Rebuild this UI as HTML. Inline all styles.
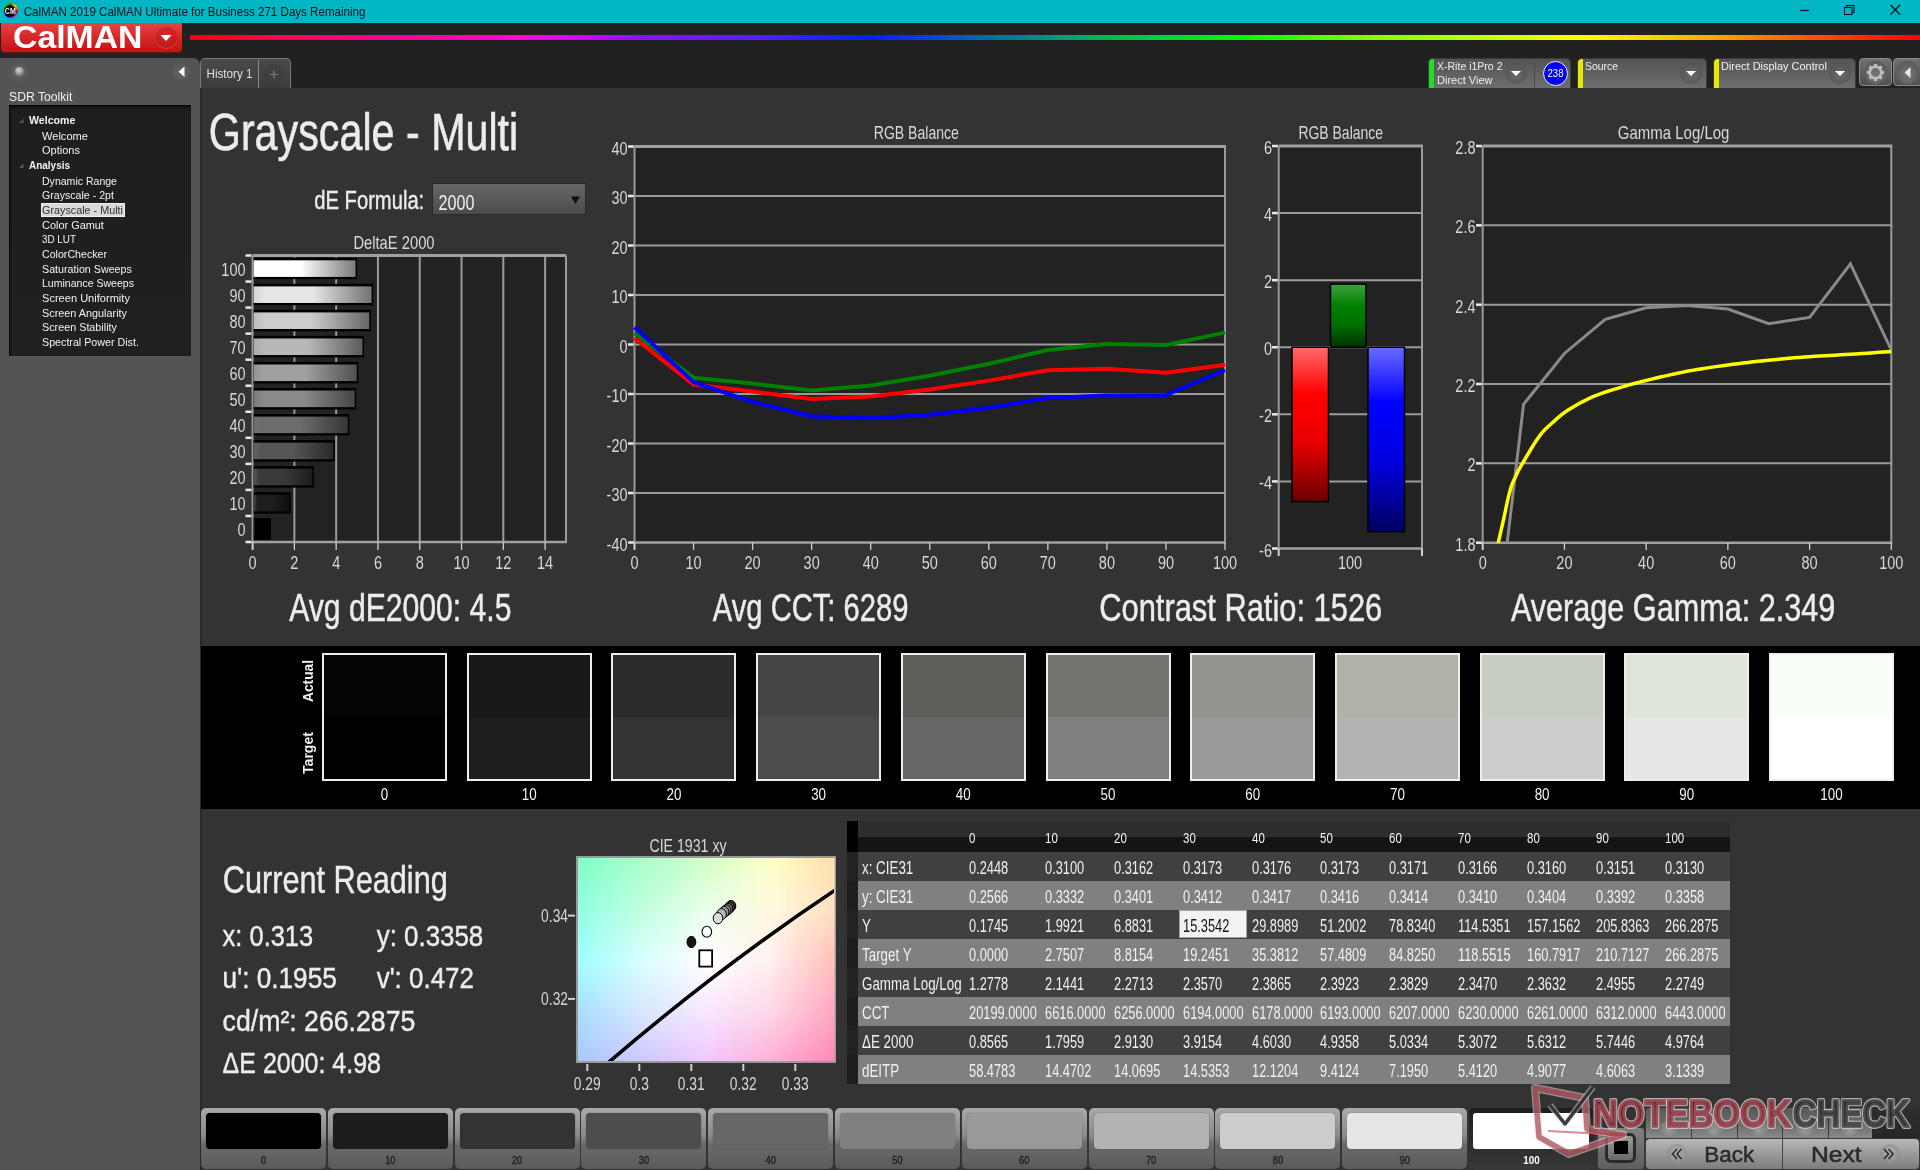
<!DOCTYPE html><html><head><meta charset="utf-8"><style>html,body{margin:0;padding:0}body{width:1920px;height:1170px;overflow:hidden;background:#333;position:relative;font-family:"Liberation Sans",sans-serif}div{position:absolute}svg{position:absolute;left:0;top:0;will-change:transform}text{font-family:"Liberation Sans",sans-serif}</style></head><body>
<div style="left:0px;top:0px;width:1920px;height:23px;background:#01b7c6"></div>
<div style="left:0px;top:23px;width:1920px;height:65px;background:#212121"></div>
<div style="left:200px;top:88px;width:1720px;height:1082px;background:#333"></div>
<div style="left:0px;top:58px;width:200px;height:1112px;background:#545454;border-top-right-radius:7px"></div>
<div style="left:200px;top:88px;width:2px;height:1082px;background:linear-gradient(to right,#262626,#2e2e2e)"></div>
<div style="left:1px;top:23px;width:181px;height:29px;background:linear-gradient(#e64444,#d42828 50%,#c41414);border-radius:0 0 4px 4px;box-shadow:0 1px 0 #5a1a1a"></div>
<div style="left:156px;top:27px;width:21px;height:21px;border-radius:50%;background:radial-gradient(circle at 50% 30%,#d42a2a,#b81818);box-shadow:0 1px 1px rgba(255,120,120,.4)"></div>
<div style="left:2.8px;top:3px;width:15px;height:15px;border-radius:50%;background:conic-gradient(#607000,#ffd000 45deg,#ff4000 80deg,#900000 100deg,#ff0080 125deg,#d000d0 150deg,#4000ff 200deg,#0040ff 225deg,#00a0ff 250deg,#00c060 280deg,#00e000 315deg,#607000)"></div>
<div style="left:4.3px;top:4.5px;width:12px;height:12px;border-radius:50%;background:#000"></div>
<div style="left:190px;top:35px;width:1730px;height:5px;background:linear-gradient(to right,#ff0000 0%,#ff0040 4%,#ff0080 9.5%,#ff00b0 15%,#ff00e0 19%,#d000ff 23%,#9010ff 26%,#5020ff 32.8%,#0020ff 39.5%,#0060c0 45%,#00b060 52%,#00ff00 60.8%,#80ff00 68.3%,#f8ff00 80.3%,#ffc000 86%,#ff8000 90.6%,#ff0000 100%)"></div>
<div style="left:200px;top:58px;width:91px;height:30px;background:linear-gradient(#4a4a4a,#3c3c3c);border:1px solid #7a7a7a;border-bottom:none;border-radius:5px 5px 0 0;box-sizing:border-box"></div>
<div style="left:258px;top:60px;width:1px;height:28px;background:#8a8a8a"></div>
<div style="left:264px;top:64px;width:20px;height:20px;border-radius:50%;background:radial-gradient(circle at 50% 40%,#444,#3a3a3a)"></div>
<div style="left:9px;top:62px;width:20px;height:20px;border-radius:50%;background:radial-gradient(circle at 50% 50%,#5e5e5e 40%,#545454 70%,#5a5a5a)"></div>
<div style="left:15px;top:67px;width:9px;height:9px;border-radius:50%;background:radial-gradient(circle at 40% 35%,#d8d8d8,#8a8a8a 60%,#666)"></div>
<div style="left:171px;top:62px;width:20px;height:20px;border-radius:50%;background:radial-gradient(circle at 50% 50%,#5e5e5e 40%,#545454 70%,#5a5a5a)"></div>
<div style="left:9px;top:105px;width:182px;height:251px;background:linear-gradient(#161616,#1e1e1e 6px,#202020);box-shadow:inset 1px 1px 2px #000"></div>
<div style="left:41px;top:203px;width:84px;height:14px;background:#d9d9d9;border:1px solid #f0f0f0;box-sizing:border-box"></div>
<div style="left:1428px;top:58px;width:143px;height:30px;background:linear-gradient(#555 0%,#5f5f5f 45%,#6e6e6e 100%);border-radius:5px 5px 0 0;border:1px solid #3a3a3a;border-bottom:none;box-sizing:border-box"></div>
<div style="left:1429px;top:59px;width:5px;height:29px;background:#22dd22;border-top-left-radius:4px"></div>
<div style="left:1577px;top:58px;width:130px;height:30px;background:linear-gradient(#555 0%,#5f5f5f 45%,#6e6e6e 100%);border-radius:5px 5px 0 0;border:1px solid #3a3a3a;border-bottom:none;box-sizing:border-box"></div>
<div style="left:1578px;top:59px;width:5px;height:29px;background:#e8e800;border-top-left-radius:4px"></div>
<div style="left:1713px;top:58px;width:143px;height:30px;background:linear-gradient(#555 0%,#5f5f5f 45%,#6e6e6e 100%);border-radius:5px 5px 0 0;border:1px solid #3a3a3a;border-bottom:none;box-sizing:border-box"></div>
<div style="left:1714px;top:59px;width:5px;height:29px;background:#e8e800;border-top-left-radius:4px"></div>
<div style="left:1505px;top:62px;width:22px;height:22px;border-radius:50%;background:radial-gradient(circle at 50% 60%,#6a6a6a,#555 70%,#4e4e4e)"></div>
<div style="left:1680px;top:62px;width:22px;height:22px;border-radius:50%;background:radial-gradient(circle at 50% 60%,#6a6a6a,#555 70%,#4e4e4e)"></div>
<div style="left:1829px;top:62px;width:22px;height:22px;border-radius:50%;background:radial-gradient(circle at 50% 60%,#6a6a6a,#555 70%,#4e4e4e)"></div>
<div style="left:1534px;top:61px;width:1px;height:27px;background:#4a4a4a"></div>
<div style="left:1543px;top:61px;width:25px;height:25px;border-radius:50%;background:#0000f0;border:1px solid #e8e8ff;box-sizing:border-box"></div>
<div style="left:1859px;top:58px;width:33px;height:28px;background:linear-gradient(#707070,#505050);border:1px solid #8a8a8a;border-radius:4px;box-sizing:border-box"></div>
<div style="left:1864px;top:61px;width:23px;height:23px;border-radius:50%;background:radial-gradient(circle at 50% 60%,#777,#5a5a5a 75%)"></div>
<div style="left:1893px;top:58px;width:30px;height:28px;background:linear-gradient(#707070,#505050);border:1px solid #8a8a8a;border-radius:4px;box-sizing:border-box"></div>
<div style="left:1896px;top:61px;width:23px;height:23px;border-radius:50%;background:radial-gradient(circle at 50% 60%,#777,#5a5a5a 75%)"></div>
<div style="left:432px;top:183px;width:154px;height:32px;background:linear-gradient(#666,#5a5a5a 50%,#4a4a4a);border:1px solid #2a2a2a;box-sizing:border-box"></div>
<div style="left:201px;top:646px;width:1719px;height:163px;background:#000"></div>
<div style="left:322px;top:653px;width:125px;height:128px;border:2px solid #eeeeee;box-sizing:border-box;background:linear-gradient(#030406 50%,#000000 50%)"></div>
<div style="left:467px;top:653px;width:125px;height:128px;border:2px solid #eeeeee;box-sizing:border-box;background:linear-gradient(#171918 50%,#1e1e1e 50%)"></div>
<div style="left:611px;top:653px;width:125px;height:128px;border:2px solid #eeeeee;box-sizing:border-box;background:linear-gradient(#2b2b29 50%,#333333 50%)"></div>
<div style="left:756px;top:653px;width:125px;height:128px;border:2px solid #eeeeee;box-sizing:border-box;background:linear-gradient(#454544 50%,#4c4c4c 50%)"></div>
<div style="left:901px;top:653px;width:125px;height:128px;border:2px solid #eeeeee;box-sizing:border-box;background:linear-gradient(#5c5f5a 50%,#666666 50%)"></div>
<div style="left:1046px;top:653px;width:125px;height:128px;border:2px solid #eeeeee;box-sizing:border-box;background:linear-gradient(#737670 50%,#808080 50%)"></div>
<div style="left:1190px;top:653px;width:125px;height:128px;border:2px solid #eeeeee;box-sizing:border-box;background:linear-gradient(#939690 50%,#9a9a9a 50%)"></div>
<div style="left:1335px;top:653px;width:125px;height:128px;border:2px solid #eeeeee;box-sizing:border-box;background:linear-gradient(#b0b2a7 50%,#b3b3b3 50%)"></div>
<div style="left:1480px;top:653px;width:125px;height:128px;border:2px solid #eeeeee;box-sizing:border-box;background:linear-gradient(#c8cdc2 50%,#cccccc 50%)"></div>
<div style="left:1624px;top:653px;width:125px;height:128px;border:2px solid #eeeeee;box-sizing:border-box;background:linear-gradient(#e0e5da 50%,#e6e6e6 50%)"></div>
<div style="left:1769px;top:653px;width:125px;height:128px;border:2px solid #eeeeee;box-sizing:border-box;background:linear-gradient(#f9fff8 50%,#ffffff 50%)"></div>
<div style="left:201px;top:1108px;width:125px;height:61px;background:linear-gradient(#aaa 0%,#8a8a8a 45%,#6a6a6a 60%,#5a5a5a 100%);border-radius:5px"></div>
<div style="left:206px;top:1113px;width:115px;height:36px;background:#000;border-radius:4px;box-shadow:0 0 1px #444"></div>
<div style="left:328px;top:1108px;width:125px;height:61px;background:linear-gradient(#aaa 0%,#8a8a8a 45%,#6a6a6a 60%,#5a5a5a 100%);border-radius:5px"></div>
<div style="left:333px;top:1113px;width:115px;height:36px;background:#1c1c1c;border-radius:4px;box-shadow:0 0 1px #444"></div>
<div style="left:455px;top:1108px;width:125px;height:61px;background:linear-gradient(#aaa 0%,#8a8a8a 45%,#6a6a6a 60%,#5a5a5a 100%);border-radius:5px"></div>
<div style="left:460px;top:1113px;width:115px;height:36px;background:#333;border-radius:4px;box-shadow:0 0 1px #444"></div>
<div style="left:581px;top:1108px;width:125px;height:61px;background:linear-gradient(#aaa 0%,#8a8a8a 45%,#6a6a6a 60%,#5a5a5a 100%);border-radius:5px"></div>
<div style="left:586px;top:1113px;width:115px;height:36px;background:#4d4d4d;border-radius:4px;box-shadow:0 0 1px #444"></div>
<div style="left:708px;top:1108px;width:125px;height:61px;background:linear-gradient(#aaa 0%,#8a8a8a 45%,#6a6a6a 60%,#5a5a5a 100%);border-radius:5px"></div>
<div style="left:713px;top:1113px;width:115px;height:36px;background:#666;border-radius:4px;box-shadow:0 0 1px #444"></div>
<div style="left:835px;top:1108px;width:125px;height:61px;background:linear-gradient(#aaa 0%,#8a8a8a 45%,#6a6a6a 60%,#5a5a5a 100%);border-radius:5px"></div>
<div style="left:840px;top:1113px;width:115px;height:36px;background:#808080;border-radius:4px;box-shadow:0 0 1px #444"></div>
<div style="left:962px;top:1108px;width:125px;height:61px;background:linear-gradient(#aaa 0%,#8a8a8a 45%,#6a6a6a 60%,#5a5a5a 100%);border-radius:5px"></div>
<div style="left:967px;top:1113px;width:115px;height:36px;background:#999;border-radius:4px;box-shadow:0 0 1px #444"></div>
<div style="left:1089px;top:1108px;width:125px;height:61px;background:linear-gradient(#aaa 0%,#8a8a8a 45%,#6a6a6a 60%,#5a5a5a 100%);border-radius:5px"></div>
<div style="left:1094px;top:1113px;width:115px;height:36px;background:#b3b3b3;border-radius:4px;box-shadow:0 0 1px #444"></div>
<div style="left:1215px;top:1108px;width:125px;height:61px;background:linear-gradient(#aaa 0%,#8a8a8a 45%,#6a6a6a 60%,#5a5a5a 100%);border-radius:5px"></div>
<div style="left:1220px;top:1113px;width:115px;height:36px;background:#ccc;border-radius:4px;box-shadow:0 0 1px #444"></div>
<div style="left:1342px;top:1108px;width:125px;height:61px;background:linear-gradient(#aaa 0%,#8a8a8a 45%,#6a6a6a 60%,#5a5a5a 100%);border-radius:5px"></div>
<div style="left:1347px;top:1113px;width:115px;height:36px;background:#e6e6e6;border-radius:4px;box-shadow:0 0 1px #444"></div>
<div style="left:1469px;top:1108px;width:125px;height:62px;background:linear-gradient(#1e1e1e,#2a2a2a 50%,#383838);border-radius:5px"></div>
<div style="left:1473px;top:1113px;width:116px;height:36px;background:#fff;border-radius:3px"></div>
<div style="left:1597px;top:1127px;width:48px;height:43px;background:linear-gradient(#808080,#5e5e5e);border-radius:4px;border:1px solid #3a3a3a;box-sizing:border-box"></div>
<div style="left:1605px;top:1133px;width:31px;height:30px;border:3px solid #2a2a2a;border-radius:6px;background:linear-gradient(#9a9a9a,#6a6a6a);box-sizing:border-box"></div>
<div style="left:1614px;top:1141px;width:14px;height:13px;background:#000"></div>
<div style="left:1646px;top:1108px;width:226px;height:30px;background:linear-gradient(#585858,#6a6a6a 50%,#8a8a8a);border-radius:3px 3px 0 0"></div>
<div style="left:1691px;top:1108px;width:1px;height:30px;background:#3a3a3a"></div>
<div style="left:1737px;top:1108px;width:1px;height:30px;background:#3a3a3a"></div>
<div style="left:1782px;top:1108px;width:1px;height:30px;background:#3a3a3a"></div>
<div style="left:1828px;top:1108px;width:1px;height:30px;background:#3a3a3a"></div>
<div style="left:1660px;top:1120px;width:18px;height:18px;border-radius:50%;background:radial-gradient(circle at 50% 60%,#9a9a9a,#7a7a7a 70%,rgba(120,120,120,0))"></div>
<div style="left:1705px;top:1120px;width:18px;height:18px;border-radius:50%;background:radial-gradient(circle at 50% 60%,#9a9a9a,#7a7a7a 70%,rgba(120,120,120,0))"></div>
<div style="left:1750px;top:1120px;width:18px;height:18px;border-radius:50%;background:radial-gradient(circle at 50% 60%,#9a9a9a,#7a7a7a 70%,rgba(120,120,120,0))"></div>
<div style="left:1796px;top:1120px;width:18px;height:18px;border-radius:50%;background:radial-gradient(circle at 50% 60%,#9a9a9a,#7a7a7a 70%,rgba(120,120,120,0))"></div>
<div style="left:1841px;top:1120px;width:18px;height:18px;border-radius:50%;background:radial-gradient(circle at 50% 60%,#9a9a9a,#7a7a7a 70%,rgba(120,120,120,0))"></div>
<div style="left:1872px;top:1108px;width:48px;height:30px;background:linear-gradient(#2e2e2e,#262626)"></div>
<div style="left:1646px;top:1139px;width:273px;height:30px;background:linear-gradient(#b8b8b8,#9a9a9a 50%,#7c7c7c);border-radius:4px;box-shadow:0 0 0 1px #3a3a3a"></div>
<div style="left:1782px;top:1139px;width:1px;height:30px;background:#444"></div>
<div style="left:1667px;top:1144px;width:20px;height:20px;border-radius:50%;background:radial-gradient(circle at 50% 40%,#b0b0b0,#7e7e7e)"></div>
<div style="left:1880px;top:1144px;width:20px;height:20px;border-radius:50%;background:radial-gradient(circle at 50% 40%,#b0b0b0,#7e7e7e)"></div>
<div style="left:847px;top:821px;width:883px;height:16px;background:#2d2d2d"></div>
<div style="left:847px;top:837px;width:883px;height:15px;background:#141414"></div>
<div style="left:847px;top:821px;width:11px;height:31px;background:#000"></div>
<div style="left:847px;top:852px;width:883px;height:29px;background:#404040"></div>
<div style="left:847px;top:852px;width:11px;height:29px;background:#222"></div>
<div style="left:847px;top:881px;width:883px;height:29px;background:#808080"></div>
<div style="left:847px;top:881px;width:11px;height:29px;background:#1e1e1e"></div>
<div style="left:847px;top:910px;width:883px;height:29px;background:#404040"></div>
<div style="left:847px;top:910px;width:11px;height:29px;background:#222"></div>
<div style="left:847px;top:939px;width:883px;height:29px;background:#808080"></div>
<div style="left:847px;top:939px;width:11px;height:29px;background:#1e1e1e"></div>
<div style="left:847px;top:968px;width:883px;height:29px;background:#404040"></div>
<div style="left:847px;top:968px;width:11px;height:29px;background:#222"></div>
<div style="left:847px;top:997px;width:883px;height:29px;background:#808080"></div>
<div style="left:847px;top:997px;width:11px;height:29px;background:#1e1e1e"></div>
<div style="left:847px;top:1026px;width:883px;height:29px;background:#404040"></div>
<div style="left:847px;top:1026px;width:11px;height:29px;background:#222"></div>
<div style="left:847px;top:1055px;width:883px;height:29px;background:#808080"></div>
<div style="left:847px;top:1055px;width:11px;height:29px;background:#1e1e1e"></div>
<div style="left:1179px;top:910px;width:68px;height:28px;background:#f2f2f2;border:1px solid #a0a0a0;box-sizing:border-box"></div>
<div style="left:576px;top:856px;width:260px;height:207px;box-sizing:border-box;border:2px solid #9a9a9a;background:#fff"></div>
<svg width="1920" height="1170" viewBox="0 0 1920 1170">
<defs><linearGradient id="bg0" x1="0" y1="0" x2="1" y2="0"><stop offset="0" stop-color="#3d3d3d"/><stop offset="0.1" stop-color="#000000"/><stop offset="0.5" stop-color="#000000"/><stop offset="1" stop-color="#000000"/></linearGradient>
<linearGradient id="bg1" x1="0" y1="0" x2="1" y2="0"><stop offset="0" stop-color="#4b4b4b"/><stop offset="0.1" stop-color="#1e1e1e"/><stop offset="0.5" stop-color="#1e1e1e"/><stop offset="1" stop-color="#0f0f0f"/></linearGradient>
<linearGradient id="bg2" x1="0" y1="0" x2="1" y2="0"><stop offset="0" stop-color="#575757"/><stop offset="0.1" stop-color="#3a3a3a"/><stop offset="0.5" stop-color="#3a3a3a"/><stop offset="1" stop-color="#1d1d1d"/></linearGradient>
<linearGradient id="bg3" x1="0" y1="0" x2="1" y2="0"><stop offset="0" stop-color="#636363"/><stop offset="0.1" stop-color="#555555"/><stop offset="0.5" stop-color="#555555"/><stop offset="1" stop-color="#2a2a2a"/></linearGradient>
<linearGradient id="bg4" x1="0" y1="0" x2="1" y2="0"><stop offset="0" stop-color="#6e6e6e"/><stop offset="0.1" stop-color="#6c6c6c"/><stop offset="0.5" stop-color="#6c6c6c"/><stop offset="1" stop-color="#363636"/></linearGradient>
<linearGradient id="bg5" x1="0" y1="0" x2="1" y2="0"><stop offset="0" stop-color="#7b7b7b"/><stop offset="0.1" stop-color="#8a8a8a"/><stop offset="0.5" stop-color="#8a8a8a"/><stop offset="1" stop-color="#454545"/></linearGradient>
<linearGradient id="bg6" x1="0" y1="0" x2="1" y2="0"><stop offset="0" stop-color="#949494"/><stop offset="0.1" stop-color="#a0a0a0"/><stop offset="0.5" stop-color="#a0a0a0"/><stop offset="1" stop-color="#505050"/></linearGradient>
<linearGradient id="bg7" x1="0" y1="0" x2="1" y2="0"><stop offset="0" stop-color="#ababab"/><stop offset="0.1" stop-color="#b8b8b8"/><stop offset="0.5" stop-color="#b8b8b8"/><stop offset="1" stop-color="#5c5c5c"/></linearGradient>
<linearGradient id="bg8" x1="0" y1="0" x2="1" y2="0"><stop offset="0" stop-color="#bdbdbd"/><stop offset="0.1" stop-color="#cccccc"/><stop offset="0.5" stop-color="#cccccc"/><stop offset="1" stop-color="#666666"/></linearGradient>
<linearGradient id="bg9" x1="0" y1="0" x2="1" y2="0"><stop offset="0" stop-color="#d5d5d5"/><stop offset="0.1" stop-color="#e6e6e6"/><stop offset="0.5" stop-color="#e6e6e6"/><stop offset="1" stop-color="#737373"/></linearGradient>
<linearGradient id="bg10" x1="0" y1="0" x2="1" y2="0"><stop offset="0" stop-color="#ffffff"/><stop offset="0.46" stop-color="#ffffff"/><stop offset="1" stop-color="#7a7a7a"/></linearGradient>
<linearGradient id="gR" x1="0" y1="0" x2="0" y2="1"><stop offset="0" stop-color="#ff6a6a"/><stop offset="0.3" stop-color="#ff0000"/><stop offset="0.62" stop-color="#e80000"/><stop offset="1" stop-color="#6a0000"/></linearGradient>
<linearGradient id="gG" x1="0" y1="0" x2="0" y2="1"><stop offset="0" stop-color="#40a040"/><stop offset="0.35" stop-color="#008000"/><stop offset="0.65" stop-color="#007000"/><stop offset="1" stop-color="#003000"/></linearGradient>
<linearGradient id="gB" x1="0" y1="0" x2="0" y2="1"><stop offset="0" stop-color="#6a6aff"/><stop offset="0.3" stop-color="#0000ff"/><stop offset="0.62" stop-color="#0000e0"/><stop offset="1" stop-color="#000060"/></linearGradient>
<clipPath id="gclip"><rect x="1482.7" y="146" width="408.5999999999999" height="396.70000000000005"/></clipPath>
<linearGradient id="cs0" x1="0" y1="0" x2="0" y2="1"><stop offset="0.00" stop-color="#82ffc8"/><stop offset="0.25" stop-color="#92ffe0"/><stop offset="0.50" stop-color="#a2ffff"/><stop offset="0.75" stop-color="#aae0ff"/><stop offset="1.00" stop-color="#aac8ff"/></linearGradient>
<linearGradient id="cs1" x1="0" y1="0" x2="0" y2="1"><stop offset="0.00" stop-color="#85ffc8"/><stop offset="0.25" stop-color="#96ffe0"/><stop offset="0.50" stop-color="#a7ffff"/><stop offset="0.75" stop-color="#aee1ff"/><stop offset="1.00" stop-color="#adc8ff"/></linearGradient>
<linearGradient id="cs2" x1="0" y1="0" x2="0" y2="1"><stop offset="0.00" stop-color="#88ffc8"/><stop offset="0.25" stop-color="#9affe0"/><stop offset="0.50" stop-color="#acffff"/><stop offset="0.75" stop-color="#b2e2ff"/><stop offset="1.00" stop-color="#b0c8ff"/></linearGradient>
<linearGradient id="cs3" x1="0" y1="0" x2="0" y2="1"><stop offset="0.00" stop-color="#8cffc8"/><stop offset="0.25" stop-color="#9effe0"/><stop offset="0.50" stop-color="#b0ffff"/><stop offset="0.75" stop-color="#b6e2ff"/><stop offset="1.00" stop-color="#b4c8ff"/></linearGradient>
<linearGradient id="cs4" x1="0" y1="0" x2="0" y2="1"><stop offset="0.00" stop-color="#8fffc8"/><stop offset="0.25" stop-color="#a2ffe0"/><stop offset="0.50" stop-color="#b5ffff"/><stop offset="0.75" stop-color="#bae3ff"/><stop offset="1.00" stop-color="#b7c8ff"/></linearGradient>
<linearGradient id="cs5" x1="0" y1="0" x2="0" y2="1"><stop offset="0.00" stop-color="#92ffc8"/><stop offset="0.25" stop-color="#a6ffe0"/><stop offset="0.50" stop-color="#baffff"/><stop offset="0.75" stop-color="#bee4ff"/><stop offset="1.00" stop-color="#bac8ff"/></linearGradient>
<linearGradient id="cs6" x1="0" y1="0" x2="0" y2="1"><stop offset="0.00" stop-color="#96ffc8"/><stop offset="0.25" stop-color="#aaffe0"/><stop offset="0.50" stop-color="#beffff"/><stop offset="0.75" stop-color="#c2e4ff"/><stop offset="1.00" stop-color="#bec8ff"/></linearGradient>
<linearGradient id="cs7" x1="0" y1="0" x2="0" y2="1"><stop offset="0.00" stop-color="#99ffc8"/><stop offset="0.25" stop-color="#aeffe0"/><stop offset="0.50" stop-color="#c3ffff"/><stop offset="0.75" stop-color="#c6e5ff"/><stop offset="1.00" stop-color="#c1c8ff"/></linearGradient>
<linearGradient id="cs8" x1="0" y1="0" x2="0" y2="1"><stop offset="0.00" stop-color="#9cffc8"/><stop offset="0.25" stop-color="#b2ffe0"/><stop offset="0.50" stop-color="#c8ffff"/><stop offset="0.75" stop-color="#cae6ff"/><stop offset="1.00" stop-color="#c4c8ff"/></linearGradient>
<linearGradient id="cs9" x1="0" y1="0" x2="0" y2="1"><stop offset="0.00" stop-color="#a0ffc8"/><stop offset="0.25" stop-color="#b6ffe0"/><stop offset="0.50" stop-color="#ccffff"/><stop offset="0.75" stop-color="#cee6ff"/><stop offset="1.00" stop-color="#c8c8ff"/></linearGradient>
<linearGradient id="cs10" x1="0" y1="0" x2="0" y2="1"><stop offset="0.00" stop-color="#a3ffc8"/><stop offset="0.25" stop-color="#baffe0"/><stop offset="0.50" stop-color="#d1ffff"/><stop offset="0.75" stop-color="#d2e7ff"/><stop offset="1.00" stop-color="#cbc8ff"/></linearGradient>
<linearGradient id="cs11" x1="0" y1="0" x2="0" y2="1"><stop offset="0.00" stop-color="#a6ffc8"/><stop offset="0.25" stop-color="#beffe0"/><stop offset="0.50" stop-color="#d6ffff"/><stop offset="0.75" stop-color="#d6e8ff"/><stop offset="1.00" stop-color="#cec8ff"/></linearGradient>
<linearGradient id="cs12" x1="0" y1="0" x2="0" y2="1"><stop offset="0.00" stop-color="#aaffc8"/><stop offset="0.25" stop-color="#c2ffe0"/><stop offset="0.50" stop-color="#daffff"/><stop offset="0.75" stop-color="#d9e8ff"/><stop offset="1.00" stop-color="#d1c8ff"/></linearGradient>
<linearGradient id="cs13" x1="0" y1="0" x2="0" y2="1"><stop offset="0.00" stop-color="#adffc8"/><stop offset="0.25" stop-color="#c5ffe1"/><stop offset="0.50" stop-color="#ddffff"/><stop offset="0.75" stop-color="#dce8ff"/><stop offset="1.00" stop-color="#d4c8ff"/></linearGradient>
<linearGradient id="cs14" x1="0" y1="0" x2="0" y2="1"><stop offset="0.00" stop-color="#b0ffc8"/><stop offset="0.25" stop-color="#c9ffe2"/><stop offset="0.50" stop-color="#e0ffff"/><stop offset="0.75" stop-color="#dfe8ff"/><stop offset="1.00" stop-color="#d7c8ff"/></linearGradient>
<linearGradient id="cs15" x1="0" y1="0" x2="0" y2="1"><stop offset="0.00" stop-color="#b4ffc8"/><stop offset="0.25" stop-color="#ccffe3"/><stop offset="0.50" stop-color="#e3ffff"/><stop offset="0.75" stop-color="#e1e8ff"/><stop offset="1.00" stop-color="#d9c8ff"/></linearGradient>
<linearGradient id="cs16" x1="0" y1="0" x2="0" y2="1"><stop offset="0.00" stop-color="#b7ffc8"/><stop offset="0.25" stop-color="#d0ffe4"/><stop offset="0.50" stop-color="#e7ffff"/><stop offset="0.75" stop-color="#e4e8ff"/><stop offset="1.00" stop-color="#dcc8ff"/></linearGradient>
<linearGradient id="cs17" x1="0" y1="0" x2="0" y2="1"><stop offset="0.00" stop-color="#baffc8"/><stop offset="0.25" stop-color="#d3ffe5"/><stop offset="0.50" stop-color="#eaffff"/><stop offset="0.75" stop-color="#e7e8ff"/><stop offset="1.00" stop-color="#dfc8ff"/></linearGradient>
<linearGradient id="cs18" x1="0" y1="0" x2="0" y2="1"><stop offset="0.00" stop-color="#beffc8"/><stop offset="0.25" stop-color="#d7ffe5"/><stop offset="0.50" stop-color="#edffff"/><stop offset="0.75" stop-color="#e9e8ff"/><stop offset="1.00" stop-color="#e1c8ff"/></linearGradient>
<linearGradient id="cs19" x1="0" y1="0" x2="0" y2="1"><stop offset="0.00" stop-color="#c1ffc8"/><stop offset="0.25" stop-color="#daffe6"/><stop offset="0.50" stop-color="#f0ffff"/><stop offset="0.75" stop-color="#ece8ff"/><stop offset="1.00" stop-color="#e4c8ff"/></linearGradient>
<linearGradient id="cs20" x1="0" y1="0" x2="0" y2="1"><stop offset="0.00" stop-color="#c4ffc8"/><stop offset="0.25" stop-color="#deffe7"/><stop offset="0.50" stop-color="#f4ffff"/><stop offset="0.75" stop-color="#efe8ff"/><stop offset="1.00" stop-color="#e7c8ff"/></linearGradient>
<linearGradient id="cs21" x1="0" y1="0" x2="0" y2="1"><stop offset="0.00" stop-color="#c8ffc8"/><stop offset="0.25" stop-color="#e1ffe8"/><stop offset="0.50" stop-color="#f7ffff"/><stop offset="0.75" stop-color="#f1e8ff"/><stop offset="1.00" stop-color="#e9c8ff"/></linearGradient>
<linearGradient id="cs22" x1="0" y1="0" x2="0" y2="1"><stop offset="0.00" stop-color="#cbffc8"/><stop offset="0.25" stop-color="#e5ffe9"/><stop offset="0.50" stop-color="#faffff"/><stop offset="0.75" stop-color="#f4e8ff"/><stop offset="1.00" stop-color="#ecc8ff"/></linearGradient>
<linearGradient id="cs23" x1="0" y1="0" x2="0" y2="1"><stop offset="0.00" stop-color="#ceffc8"/><stop offset="0.25" stop-color="#e8ffea"/><stop offset="0.50" stop-color="#fdffff"/><stop offset="0.75" stop-color="#f7e8ff"/><stop offset="1.00" stop-color="#efc8ff"/></linearGradient>
<linearGradient id="cs24" x1="0" y1="0" x2="0" y2="1"><stop offset="0.00" stop-color="#d2ffc8"/><stop offset="0.25" stop-color="#ebffea"/><stop offset="0.50" stop-color="#fffefe"/><stop offset="0.75" stop-color="#f8e7fe"/><stop offset="1.00" stop-color="#f1c7fd"/></linearGradient>
<linearGradient id="cs25" x1="0" y1="0" x2="0" y2="1"><stop offset="0.00" stop-color="#d6ffc8"/><stop offset="0.25" stop-color="#edfee9"/><stop offset="0.50" stop-color="#fffdfd"/><stop offset="0.75" stop-color="#f9e6fc"/><stop offset="1.00" stop-color="#f2c5fa"/></linearGradient>
<linearGradient id="cs26" x1="0" y1="0" x2="0" y2="1"><stop offset="0.00" stop-color="#daffc8"/><stop offset="0.25" stop-color="#eefee8"/><stop offset="0.50" stop-color="#fffcfc"/><stop offset="0.75" stop-color="#f9e5fa"/><stop offset="1.00" stop-color="#f3c3f7"/></linearGradient>
<linearGradient id="cs27" x1="0" y1="0" x2="0" y2="1"><stop offset="0.00" stop-color="#deffc8"/><stop offset="0.25" stop-color="#f0fee7"/><stop offset="0.50" stop-color="#fffbfb"/><stop offset="0.75" stop-color="#fae3f8"/><stop offset="1.00" stop-color="#f4c1f4"/></linearGradient>
<linearGradient id="cs28" x1="0" y1="0" x2="0" y2="1"><stop offset="0.00" stop-color="#e2ffc8"/><stop offset="0.25" stop-color="#f2fde6"/><stop offset="0.50" stop-color="#fff9f9"/><stop offset="0.75" stop-color="#fbe2f6"/><stop offset="1.00" stop-color="#f6bff0"/></linearGradient>
<linearGradient id="cs29" x1="0" y1="0" x2="0" y2="1"><stop offset="0.00" stop-color="#e6ffc8"/><stop offset="0.25" stop-color="#f4fde5"/><stop offset="0.50" stop-color="#fff8f8"/><stop offset="0.75" stop-color="#fbe1f4"/><stop offset="1.00" stop-color="#f7bded"/></linearGradient>
<linearGradient id="cs30" x1="0" y1="0" x2="0" y2="1"><stop offset="0.00" stop-color="#e9ffc8"/><stop offset="0.25" stop-color="#f5fce5"/><stop offset="0.50" stop-color="#fff7f7"/><stop offset="0.75" stop-color="#fcdff3"/><stop offset="1.00" stop-color="#f8bbea"/></linearGradient>
<linearGradient id="cs31" x1="0" y1="0" x2="0" y2="1"><stop offset="0.00" stop-color="#edffc8"/><stop offset="0.25" stop-color="#f7fce4"/><stop offset="0.50" stop-color="#fff6f6"/><stop offset="0.75" stop-color="#fcdef1"/><stop offset="1.00" stop-color="#f9b9e7"/></linearGradient>
<linearGradient id="cs32" x1="0" y1="0" x2="0" y2="1"><stop offset="0.00" stop-color="#f1ffc8"/><stop offset="0.25" stop-color="#f9fbe3"/><stop offset="0.50" stop-color="#fff4f4"/><stop offset="0.75" stop-color="#fdddef"/><stop offset="1.00" stop-color="#fbb7e3"/></linearGradient>
<linearGradient id="cs33" x1="0" y1="0" x2="0" y2="1"><stop offset="0.00" stop-color="#f5ffc8"/><stop offset="0.25" stop-color="#fbfbe2"/><stop offset="0.50" stop-color="#fff3f3"/><stop offset="0.75" stop-color="#fedbed"/><stop offset="1.00" stop-color="#fcb5e0"/></linearGradient>
<linearGradient id="cs34" x1="0" y1="0" x2="0" y2="1"><stop offset="0.00" stop-color="#f9ffc8"/><stop offset="0.25" stop-color="#fcfbe1"/><stop offset="0.50" stop-color="#fff2f2"/><stop offset="0.75" stop-color="#fedaeb"/><stop offset="1.00" stop-color="#fdb3dd"/></linearGradient>
<linearGradient id="cs35" x1="0" y1="0" x2="0" y2="1"><stop offset="0.00" stop-color="#fdffc8"/><stop offset="0.25" stop-color="#fefae0"/><stop offset="0.50" stop-color="#fff1f1"/><stop offset="0.75" stop-color="#ffd9e9"/><stop offset="1.00" stop-color="#feb1da"/></linearGradient>
<linearGradient id="cs36" x1="0" y1="0" x2="0" y2="1"><stop offset="0.00" stop-color="#fffec7"/><stop offset="0.25" stop-color="#fff9df"/><stop offset="0.50" stop-color="#ffeeee"/><stop offset="0.75" stop-color="#ffd6e6"/><stop offset="1.00" stop-color="#ffaed7"/></linearGradient>
<linearGradient id="cs37" x1="0" y1="0" x2="0" y2="1"><stop offset="0.00" stop-color="#fffbc4"/><stop offset="0.25" stop-color="#fff7dc"/><stop offset="0.50" stop-color="#ffeae9"/><stop offset="0.75" stop-color="#ffd2e3"/><stop offset="1.00" stop-color="#ffabd4"/></linearGradient>
<linearGradient id="cs38" x1="0" y1="0" x2="0" y2="1"><stop offset="0.00" stop-color="#fff9c1"/><stop offset="0.25" stop-color="#fff5d9"/><stop offset="0.50" stop-color="#ffe6e4"/><stop offset="0.75" stop-color="#ffcee0"/><stop offset="1.00" stop-color="#ffa8d1"/></linearGradient>
<linearGradient id="cs39" x1="0" y1="0" x2="0" y2="1"><stop offset="0.00" stop-color="#fff6bf"/><stop offset="0.25" stop-color="#fff2d7"/><stop offset="0.50" stop-color="#ffe2e0"/><stop offset="0.75" stop-color="#ffcadc"/><stop offset="1.00" stop-color="#ffa4cf"/></linearGradient>
<linearGradient id="cs40" x1="0" y1="0" x2="0" y2="1"><stop offset="0.00" stop-color="#fff3bc"/><stop offset="0.25" stop-color="#fff0d4"/><stop offset="0.50" stop-color="#ffdedb"/><stop offset="0.75" stop-color="#ffc6d9"/><stop offset="1.00" stop-color="#ffa1cc"/></linearGradient>
<linearGradient id="cs41" x1="0" y1="0" x2="0" y2="1"><stop offset="0.00" stop-color="#fff1b9"/><stop offset="0.25" stop-color="#ffeed1"/><stop offset="0.50" stop-color="#ffdad6"/><stop offset="0.75" stop-color="#ffc2d6"/><stop offset="1.00" stop-color="#ff9ec9"/></linearGradient>
<linearGradient id="cs42" x1="0" y1="0" x2="0" y2="1"><stop offset="0.00" stop-color="#ffeeb7"/><stop offset="0.25" stop-color="#ffeccf"/><stop offset="0.50" stop-color="#ffd6d2"/><stop offset="0.75" stop-color="#ffbed2"/><stop offset="1.00" stop-color="#ff9ac7"/></linearGradient>
<linearGradient id="cs43" x1="0" y1="0" x2="0" y2="1"><stop offset="0.00" stop-color="#ffecb4"/><stop offset="0.25" stop-color="#ffeacc"/><stop offset="0.50" stop-color="#ffd2cd"/><stop offset="0.75" stop-color="#ffbacf"/><stop offset="1.00" stop-color="#ff97c4"/></linearGradient>
<linearGradient id="cs44" x1="0" y1="0" x2="0" y2="1"><stop offset="0.00" stop-color="#ffe9b1"/><stop offset="0.25" stop-color="#ffe8c9"/><stop offset="0.50" stop-color="#ffcec8"/><stop offset="0.75" stop-color="#ffb6cc"/><stop offset="1.00" stop-color="#ff94c1"/></linearGradient>
<linearGradient id="cs45" x1="0" y1="0" x2="0" y2="1"><stop offset="0.00" stop-color="#ffe6af"/><stop offset="0.25" stop-color="#ffe5c7"/><stop offset="0.50" stop-color="#ffcac4"/><stop offset="0.75" stop-color="#ffb2c8"/><stop offset="1.00" stop-color="#ff90bf"/></linearGradient>
<linearGradient id="cs46" x1="0" y1="0" x2="0" y2="1"><stop offset="0.00" stop-color="#ffe4ac"/><stop offset="0.25" stop-color="#ffe3c4"/><stop offset="0.50" stop-color="#ffc6bf"/><stop offset="0.75" stop-color="#ffaec5"/><stop offset="1.00" stop-color="#ff8dbc"/></linearGradient>
<linearGradient id="cs47" x1="0" y1="0" x2="0" y2="1"><stop offset="0.00" stop-color="#ffe1a9"/><stop offset="0.25" stop-color="#ffe1c1"/><stop offset="0.50" stop-color="#ffc2ba"/><stop offset="0.75" stop-color="#ffaac2"/><stop offset="1.00" stop-color="#ff8ab9"/></linearGradient>
<clipPath id="cclip"><rect x="578" y="858" width="256" height="203"/></clipPath></defs>
<rect x="252.60" y="255.50" width="313.40" height="286.50" fill="#222"/>
<line x1="294.39" y1="255.50" x2="294.39" y2="542.00" stroke="#9a9a9a" stroke-width="2"/>
<line x1="336.17" y1="255.50" x2="336.17" y2="542.00" stroke="#9a9a9a" stroke-width="2"/>
<line x1="377.96" y1="255.50" x2="377.96" y2="542.00" stroke="#9a9a9a" stroke-width="2"/>
<line x1="419.75" y1="255.50" x2="419.75" y2="542.00" stroke="#9a9a9a" stroke-width="2"/>
<line x1="461.53" y1="255.50" x2="461.53" y2="542.00" stroke="#9a9a9a" stroke-width="2"/>
<line x1="503.32" y1="255.50" x2="503.32" y2="542.00" stroke="#9a9a9a" stroke-width="2"/>
<line x1="545.11" y1="255.50" x2="545.11" y2="542.00" stroke="#9a9a9a" stroke-width="2"/>
<line x1="252.60" y1="255.50" x2="566.00" y2="255.50" stroke="#a0a0a0" stroke-width="3"/>
<line x1="566.00" y1="255.50" x2="566.00" y2="542.00" stroke="#9a9a9a" stroke-width="2"/>
<line x1="252.60" y1="255.50" x2="252.60" y2="543.00" stroke="#9a9a9a" stroke-width="2"/>
<line x1="251.60" y1="542.00" x2="567.00" y2="542.00" stroke="#a0a0a0" stroke-width="2.5"/>
<line x1="245.50" y1="542.00" x2="251.50" y2="542.00" stroke="#e8e8e8" stroke-width="2.5"/>
<line x1="245.50" y1="515.95" x2="251.50" y2="515.95" stroke="#e8e8e8" stroke-width="2.5"/>
<line x1="245.50" y1="489.91" x2="251.50" y2="489.91" stroke="#e8e8e8" stroke-width="2.5"/>
<line x1="245.50" y1="463.86" x2="251.50" y2="463.86" stroke="#e8e8e8" stroke-width="2.5"/>
<line x1="245.50" y1="437.82" x2="251.50" y2="437.82" stroke="#e8e8e8" stroke-width="2.5"/>
<line x1="245.50" y1="411.77" x2="251.50" y2="411.77" stroke="#e8e8e8" stroke-width="2.5"/>
<line x1="245.50" y1="385.73" x2="251.50" y2="385.73" stroke="#e8e8e8" stroke-width="2.5"/>
<line x1="245.50" y1="359.68" x2="251.50" y2="359.68" stroke="#e8e8e8" stroke-width="2.5"/>
<line x1="245.50" y1="333.64" x2="251.50" y2="333.64" stroke="#e8e8e8" stroke-width="2.5"/>
<line x1="245.50" y1="307.59" x2="251.50" y2="307.59" stroke="#e8e8e8" stroke-width="2.5"/>
<line x1="245.50" y1="281.55" x2="251.50" y2="281.55" stroke="#e8e8e8" stroke-width="2.5"/>
<line x1="245.50" y1="255.50" x2="251.50" y2="255.50" stroke="#e8e8e8" stroke-width="2.5"/>
<line x1="252.60" y1="542.00" x2="252.60" y2="550.00" stroke="#d0d0d0" stroke-width="2"/>
<text transform="translate(252.60,569.00) scale(0.7800,1)" font-size="18.60" fill="#d8d8d8" text-anchor="middle">0</text>
<line x1="294.39" y1="542.00" x2="294.39" y2="550.00" stroke="#d0d0d0" stroke-width="1.3"/>
<text transform="translate(294.39,569.00) scale(0.7800,1)" font-size="18.60" fill="#d8d8d8" text-anchor="middle">2</text>
<line x1="336.17" y1="542.00" x2="336.17" y2="550.00" stroke="#d0d0d0" stroke-width="1.3"/>
<text transform="translate(336.17,569.00) scale(0.7800,1)" font-size="18.60" fill="#d8d8d8" text-anchor="middle">4</text>
<line x1="377.96" y1="542.00" x2="377.96" y2="550.00" stroke="#d0d0d0" stroke-width="1.3"/>
<text transform="translate(377.96,569.00) scale(0.7800,1)" font-size="18.60" fill="#d8d8d8" text-anchor="middle">6</text>
<line x1="419.75" y1="542.00" x2="419.75" y2="550.00" stroke="#d0d0d0" stroke-width="1.3"/>
<text transform="translate(419.75,569.00) scale(0.7800,1)" font-size="18.60" fill="#d8d8d8" text-anchor="middle">8</text>
<line x1="461.53" y1="542.00" x2="461.53" y2="550.00" stroke="#d0d0d0" stroke-width="1.3"/>
<text transform="translate(461.53,569.00) scale(0.7800,1)" font-size="18.60" fill="#d8d8d8" text-anchor="middle">10</text>
<line x1="503.32" y1="542.00" x2="503.32" y2="550.00" stroke="#d0d0d0" stroke-width="1.3"/>
<text transform="translate(503.32,569.00) scale(0.7800,1)" font-size="18.60" fill="#d8d8d8" text-anchor="middle">12</text>
<line x1="545.11" y1="542.00" x2="545.11" y2="550.00" stroke="#d0d0d0" stroke-width="1.3"/>
<text transform="translate(545.11,569.00) scale(0.7800,1)" font-size="18.60" fill="#d8d8d8" text-anchor="middle">14</text>
<rect x="253.60" y="518.18" width="17.40" height="21.5" fill="#000"/>
<rect x="253.60" y="520.78" width="15.90" height="16.6" fill="url(#bg0)"/>
<text transform="translate(245.50,536.18) scale(0.7800,1)" font-size="18.60" fill="#d8d8d8" text-anchor="end">0</text>
<rect x="253.60" y="492.13" width="37.02" height="21.5" fill="#000"/>
<rect x="253.60" y="494.73" width="35.52" height="16.6" fill="url(#bg1)"/>
<text transform="translate(245.50,510.13) scale(0.7800,1)" font-size="18.60" fill="#d8d8d8" text-anchor="end">10</text>
<rect x="253.60" y="466.09" width="60.36" height="21.5" fill="#000"/>
<rect x="253.60" y="468.69" width="58.86" height="16.6" fill="url(#bg2)"/>
<text transform="translate(245.50,484.09) scale(0.7800,1)" font-size="18.60" fill="#d8d8d8" text-anchor="end">20</text>
<rect x="253.60" y="440.04" width="81.31" height="21.5" fill="#000"/>
<rect x="253.60" y="442.64" width="79.81" height="16.6" fill="url(#bg3)"/>
<text transform="translate(245.50,458.04) scale(0.7800,1)" font-size="18.60" fill="#d8d8d8" text-anchor="end">30</text>
<rect x="253.60" y="414.00" width="95.67" height="21.5" fill="#000"/>
<rect x="253.60" y="416.60" width="94.17" height="16.6" fill="url(#bg4)"/>
<text transform="translate(245.50,432.00) scale(0.7800,1)" font-size="18.60" fill="#d8d8d8" text-anchor="end">40</text>
<rect x="253.60" y="387.95" width="102.63" height="21.5" fill="#000"/>
<rect x="253.60" y="390.55" width="101.13" height="16.6" fill="url(#bg5)"/>
<text transform="translate(245.50,405.95) scale(0.7800,1)" font-size="18.60" fill="#d8d8d8" text-anchor="end">50</text>
<rect x="253.60" y="361.90" width="104.66" height="21.5" fill="#000"/>
<rect x="253.60" y="364.50" width="103.16" height="16.6" fill="url(#bg6)"/>
<text transform="translate(245.50,379.90) scale(0.7800,1)" font-size="18.60" fill="#d8d8d8" text-anchor="end">60</text>
<rect x="253.60" y="335.86" width="110.39" height="21.5" fill="#000"/>
<rect x="253.60" y="338.46" width="108.89" height="16.6" fill="url(#bg7)"/>
<text transform="translate(245.50,353.86) scale(0.7800,1)" font-size="18.60" fill="#d8d8d8" text-anchor="end">70</text>
<rect x="253.60" y="309.81" width="117.15" height="21.5" fill="#000"/>
<rect x="253.60" y="312.41" width="115.65" height="16.6" fill="url(#bg8)"/>
<text transform="translate(245.50,327.81) scale(0.7800,1)" font-size="18.60" fill="#d8d8d8" text-anchor="end">80</text>
<rect x="253.60" y="283.77" width="119.52" height="21.5" fill="#000"/>
<rect x="253.60" y="286.37" width="118.02" height="16.6" fill="url(#bg9)"/>
<text transform="translate(245.50,301.77) scale(0.7800,1)" font-size="18.60" fill="#d8d8d8" text-anchor="end">90</text>
<rect x="253.60" y="257.72" width="103.47" height="21.5" fill="#000"/>
<rect x="253.60" y="260.32" width="101.97" height="16.6" fill="url(#bg10)"/>
<text transform="translate(245.50,275.72) scale(0.7800,1)" font-size="18.60" fill="#d8d8d8" text-anchor="end">100</text>
<rect x="634.50" y="146.50" width="590.50" height="396.00" fill="#222"/>
<line x1="634.50" y1="146.50" x2="1226.00" y2="146.50" stroke="#a0a0a0" stroke-width="3"/>
<line x1="628.00" y1="146.50" x2="634.00" y2="146.50" stroke="#e8e8e8" stroke-width="2.5"/>
<text transform="translate(627.50,154.50) scale(0.7800,1)" font-size="18.60" fill="#d8d8d8" text-anchor="end">40</text>
<line x1="634.50" y1="196.00" x2="1226.00" y2="196.00" stroke="#9a9a9a" stroke-width="2"/>
<line x1="628.00" y1="196.00" x2="634.00" y2="196.00" stroke="#e8e8e8" stroke-width="2.5"/>
<text transform="translate(627.50,204.00) scale(0.7800,1)" font-size="18.60" fill="#d8d8d8" text-anchor="end">30</text>
<line x1="634.50" y1="245.50" x2="1226.00" y2="245.50" stroke="#9a9a9a" stroke-width="2"/>
<line x1="628.00" y1="245.50" x2="634.00" y2="245.50" stroke="#e8e8e8" stroke-width="2.5"/>
<text transform="translate(627.50,253.50) scale(0.7800,1)" font-size="18.60" fill="#d8d8d8" text-anchor="end">20</text>
<line x1="634.50" y1="295.00" x2="1226.00" y2="295.00" stroke="#9a9a9a" stroke-width="2"/>
<line x1="628.00" y1="295.00" x2="634.00" y2="295.00" stroke="#e8e8e8" stroke-width="2.5"/>
<text transform="translate(627.50,303.00) scale(0.7800,1)" font-size="18.60" fill="#d8d8d8" text-anchor="end">10</text>
<line x1="634.50" y1="344.50" x2="1226.00" y2="344.50" stroke="#9a9a9a" stroke-width="2"/>
<line x1="628.00" y1="344.50" x2="634.00" y2="344.50" stroke="#e8e8e8" stroke-width="2.5"/>
<text transform="translate(627.50,352.50) scale(0.7800,1)" font-size="18.60" fill="#d8d8d8" text-anchor="end">0</text>
<line x1="634.50" y1="394.00" x2="1226.00" y2="394.00" stroke="#9a9a9a" stroke-width="2"/>
<line x1="628.00" y1="394.00" x2="634.00" y2="394.00" stroke="#e8e8e8" stroke-width="2.5"/>
<text transform="translate(627.50,402.00) scale(0.7800,1)" font-size="18.60" fill="#d8d8d8" text-anchor="end">-10</text>
<line x1="634.50" y1="443.50" x2="1226.00" y2="443.50" stroke="#9a9a9a" stroke-width="2"/>
<line x1="628.00" y1="443.50" x2="634.00" y2="443.50" stroke="#e8e8e8" stroke-width="2.5"/>
<text transform="translate(627.50,451.50) scale(0.7800,1)" font-size="18.60" fill="#d8d8d8" text-anchor="end">-20</text>
<line x1="634.50" y1="493.00" x2="1226.00" y2="493.00" stroke="#9a9a9a" stroke-width="2"/>
<line x1="628.00" y1="493.00" x2="634.00" y2="493.00" stroke="#e8e8e8" stroke-width="2.5"/>
<text transform="translate(627.50,501.00) scale(0.7800,1)" font-size="18.60" fill="#d8d8d8" text-anchor="end">-30</text>
<line x1="634.50" y1="542.50" x2="1226.00" y2="542.50" stroke="#a0a0a0" stroke-width="2.5"/>
<line x1="628.00" y1="542.50" x2="634.00" y2="542.50" stroke="#e8e8e8" stroke-width="2.5"/>
<text transform="translate(627.50,550.50) scale(0.7800,1)" font-size="18.60" fill="#d8d8d8" text-anchor="end">-40</text>
<line x1="634.50" y1="146.50" x2="634.50" y2="542.50" stroke="#9a9a9a" stroke-width="2"/>
<line x1="1225.00" y1="146.50" x2="1225.00" y2="542.50" stroke="#9a9a9a" stroke-width="2"/>
<line x1="634.50" y1="542.50" x2="634.50" y2="550.00" stroke="#d0d0d0" stroke-width="2"/>
<text transform="translate(634.50,569.00) scale(0.7800,1)" font-size="18.60" fill="#d8d8d8" text-anchor="middle">0</text>
<line x1="693.55" y1="542.50" x2="693.55" y2="550.00" stroke="#d0d0d0" stroke-width="1.3"/>
<text transform="translate(693.55,569.00) scale(0.7800,1)" font-size="18.60" fill="#d8d8d8" text-anchor="middle">10</text>
<line x1="752.60" y1="542.50" x2="752.60" y2="550.00" stroke="#d0d0d0" stroke-width="1.3"/>
<text transform="translate(752.60,569.00) scale(0.7800,1)" font-size="18.60" fill="#d8d8d8" text-anchor="middle">20</text>
<line x1="811.65" y1="542.50" x2="811.65" y2="550.00" stroke="#d0d0d0" stroke-width="1.3"/>
<text transform="translate(811.65,569.00) scale(0.7800,1)" font-size="18.60" fill="#d8d8d8" text-anchor="middle">30</text>
<line x1="870.70" y1="542.50" x2="870.70" y2="550.00" stroke="#d0d0d0" stroke-width="1.3"/>
<text transform="translate(870.70,569.00) scale(0.7800,1)" font-size="18.60" fill="#d8d8d8" text-anchor="middle">40</text>
<line x1="929.75" y1="542.50" x2="929.75" y2="550.00" stroke="#d0d0d0" stroke-width="1.3"/>
<text transform="translate(929.75,569.00) scale(0.7800,1)" font-size="18.60" fill="#d8d8d8" text-anchor="middle">50</text>
<line x1="988.80" y1="542.50" x2="988.80" y2="550.00" stroke="#d0d0d0" stroke-width="1.3"/>
<text transform="translate(988.80,569.00) scale(0.7800,1)" font-size="18.60" fill="#d8d8d8" text-anchor="middle">60</text>
<line x1="1047.85" y1="542.50" x2="1047.85" y2="550.00" stroke="#d0d0d0" stroke-width="1.3"/>
<text transform="translate(1047.85,569.00) scale(0.7800,1)" font-size="18.60" fill="#d8d8d8" text-anchor="middle">70</text>
<line x1="1106.90" y1="542.50" x2="1106.90" y2="550.00" stroke="#d0d0d0" stroke-width="1.3"/>
<text transform="translate(1106.90,569.00) scale(0.7800,1)" font-size="18.60" fill="#d8d8d8" text-anchor="middle">80</text>
<line x1="1165.95" y1="542.50" x2="1165.95" y2="550.00" stroke="#d0d0d0" stroke-width="1.3"/>
<text transform="translate(1165.95,569.00) scale(0.7800,1)" font-size="18.60" fill="#d8d8d8" text-anchor="middle">90</text>
<line x1="1225.00" y1="542.50" x2="1225.00" y2="550.00" stroke="#d0d0d0" stroke-width="1.3"/>
<text transform="translate(1225.00,569.00) scale(0.7800,1)" font-size="18.60" fill="#d8d8d8" text-anchor="middle">100</text>
<polyline points="634.50,333.12 693.55,377.67 752.60,383.60 811.65,390.53 870.70,385.58 929.75,375.69 988.80,363.80 1047.85,349.94 1106.90,344.00 1165.95,345.00 1225.00,332.62" fill="none" stroke="#008000" stroke-width="4" stroke-linejoin="round"/>
<polyline points="634.50,338.06 693.55,384.60 752.60,391.52 811.65,398.95 870.70,396.48 929.75,389.55 988.80,380.63 1047.85,370.24 1106.90,368.75 1165.95,372.72 1225.00,364.80" fill="none" stroke="#ff0000" stroke-width="4" stroke-linejoin="round"/>
<polyline points="634.50,327.18 693.55,382.12 752.60,401.92 811.65,416.27 870.70,418.25 929.75,414.79 988.80,407.86 1047.85,397.96 1106.90,395.49 1165.95,394.99 1225.00,370.24" fill="none" stroke="#0000ff" stroke-width="4" stroke-linejoin="round"/>
<rect x="1278.70" y="146.00" width="143.30" height="402.50" fill="#222"/>
<line x1="1278.70" y1="146.00" x2="1423.00" y2="146.00" stroke="#a0a0a0" stroke-width="3"/>
<line x1="1272.00" y1="146.00" x2="1278.00" y2="146.00" stroke="#e8e8e8" stroke-width="2.5"/>
<text transform="translate(1272.00,154.00) scale(0.7800,1)" font-size="18.60" fill="#d8d8d8" text-anchor="end">6</text>
<line x1="1278.70" y1="213.08" x2="1423.00" y2="213.08" stroke="#9a9a9a" stroke-width="2"/>
<line x1="1272.00" y1="213.08" x2="1278.00" y2="213.08" stroke="#e8e8e8" stroke-width="2.5"/>
<text transform="translate(1272.00,221.08) scale(0.7800,1)" font-size="18.60" fill="#d8d8d8" text-anchor="end">4</text>
<line x1="1278.70" y1="280.17" x2="1423.00" y2="280.17" stroke="#9a9a9a" stroke-width="2"/>
<line x1="1272.00" y1="280.17" x2="1278.00" y2="280.17" stroke="#e8e8e8" stroke-width="2.5"/>
<text transform="translate(1272.00,288.17) scale(0.7800,1)" font-size="18.60" fill="#d8d8d8" text-anchor="end">2</text>
<line x1="1278.70" y1="347.25" x2="1423.00" y2="347.25" stroke="#9a9a9a" stroke-width="2"/>
<line x1="1272.00" y1="347.25" x2="1278.00" y2="347.25" stroke="#e8e8e8" stroke-width="2.5"/>
<text transform="translate(1272.00,355.25) scale(0.7800,1)" font-size="18.60" fill="#d8d8d8" text-anchor="end">0</text>
<line x1="1278.70" y1="414.33" x2="1423.00" y2="414.33" stroke="#9a9a9a" stroke-width="2"/>
<line x1="1272.00" y1="414.33" x2="1278.00" y2="414.33" stroke="#e8e8e8" stroke-width="2.5"/>
<text transform="translate(1272.00,422.33) scale(0.7800,1)" font-size="18.60" fill="#d8d8d8" text-anchor="end">-2</text>
<line x1="1278.70" y1="481.42" x2="1423.00" y2="481.42" stroke="#9a9a9a" stroke-width="2"/>
<line x1="1272.00" y1="481.42" x2="1278.00" y2="481.42" stroke="#e8e8e8" stroke-width="2.5"/>
<text transform="translate(1272.00,489.42) scale(0.7800,1)" font-size="18.60" fill="#d8d8d8" text-anchor="end">-4</text>
<line x1="1278.70" y1="548.50" x2="1423.00" y2="548.50" stroke="#a0a0a0" stroke-width="2.5"/>
<line x1="1272.00" y1="548.50" x2="1278.00" y2="548.50" stroke="#e8e8e8" stroke-width="2.5"/>
<text transform="translate(1272.00,556.50) scale(0.7800,1)" font-size="18.60" fill="#d8d8d8" text-anchor="end">-6</text>
<line x1="1278.70" y1="146.00" x2="1278.70" y2="548.50" stroke="#9a9a9a" stroke-width="2"/>
<line x1="1422.00" y1="146.00" x2="1422.00" y2="548.50" stroke="#9a9a9a" stroke-width="2"/>
<line x1="1278.70" y1="548.50" x2="1278.70" y2="556.00" stroke="#d0d0d0" stroke-width="2"/>
<line x1="1422.00" y1="548.50" x2="1422.00" y2="556.00" stroke="#d0d0d0" stroke-width="2"/>
<text transform="translate(1350.00,569.00) scale(0.7800,1)" font-size="18.60" fill="#d8d8d8" text-anchor="middle">100</text>
<rect x="1292" y="347.25" width="36.5" height="154.29" fill="url(#gR)" stroke="#000" stroke-width="1.5"/>
<rect x="1330.5" y="284.19" width="35.5" height="63.06" fill="url(#gG)" stroke="#000" stroke-width="1.5"/>
<rect x="1368" y="347.25" width="36.5" height="184.48" fill="url(#gB)" stroke="#000" stroke-width="1.5"/>
<rect x="1482.70" y="146.00" width="408.60" height="396.70" fill="#222"/>
<line x1="1482.70" y1="146.00" x2="1892.30" y2="146.00" stroke="#a0a0a0" stroke-width="3"/>
<line x1="1476.00" y1="146.00" x2="1482.00" y2="146.00" stroke="#e8e8e8" stroke-width="2.5"/>
<text transform="translate(1475.50,154.00) scale(0.7800,1)" font-size="18.60" fill="#d8d8d8" text-anchor="end">2.8</text>
<line x1="1482.70" y1="225.34" x2="1892.30" y2="225.34" stroke="#9a9a9a" stroke-width="2"/>
<line x1="1476.00" y1="225.34" x2="1482.00" y2="225.34" stroke="#e8e8e8" stroke-width="2.5"/>
<text transform="translate(1475.50,233.34) scale(0.7800,1)" font-size="18.60" fill="#d8d8d8" text-anchor="end">2.6</text>
<line x1="1482.70" y1="304.68" x2="1892.30" y2="304.68" stroke="#9a9a9a" stroke-width="2"/>
<line x1="1476.00" y1="304.68" x2="1482.00" y2="304.68" stroke="#e8e8e8" stroke-width="2.5"/>
<text transform="translate(1475.50,312.68) scale(0.7800,1)" font-size="18.60" fill="#d8d8d8" text-anchor="end">2.4</text>
<line x1="1482.70" y1="384.02" x2="1892.30" y2="384.02" stroke="#9a9a9a" stroke-width="2"/>
<line x1="1476.00" y1="384.02" x2="1482.00" y2="384.02" stroke="#e8e8e8" stroke-width="2.5"/>
<text transform="translate(1475.50,392.02) scale(0.7800,1)" font-size="18.60" fill="#d8d8d8" text-anchor="end">2.2</text>
<line x1="1482.70" y1="463.36" x2="1892.30" y2="463.36" stroke="#9a9a9a" stroke-width="2"/>
<line x1="1476.00" y1="463.36" x2="1482.00" y2="463.36" stroke="#e8e8e8" stroke-width="2.5"/>
<text transform="translate(1475.50,471.36) scale(0.7800,1)" font-size="18.60" fill="#d8d8d8" text-anchor="end">2</text>
<line x1="1482.70" y1="542.70" x2="1892.30" y2="542.70" stroke="#a0a0a0" stroke-width="2.5"/>
<line x1="1476.00" y1="542.70" x2="1482.00" y2="542.70" stroke="#e8e8e8" stroke-width="2.5"/>
<text transform="translate(1475.50,550.70) scale(0.7800,1)" font-size="18.60" fill="#d8d8d8" text-anchor="end">1.8</text>
<line x1="1482.70" y1="146.00" x2="1482.70" y2="542.70" stroke="#9a9a9a" stroke-width="2"/>
<line x1="1891.30" y1="146.00" x2="1891.30" y2="542.70" stroke="#9a9a9a" stroke-width="2"/>
<line x1="1482.70" y1="542.70" x2="1482.70" y2="550.00" stroke="#d0d0d0" stroke-width="2"/>
<text transform="translate(1482.70,569.00) scale(0.7800,1)" font-size="18.60" fill="#d8d8d8" text-anchor="middle">0</text>
<line x1="1564.42" y1="542.70" x2="1564.42" y2="550.00" stroke="#d0d0d0" stroke-width="1.3"/>
<text transform="translate(1564.42,569.00) scale(0.7800,1)" font-size="18.60" fill="#d8d8d8" text-anchor="middle">20</text>
<line x1="1646.14" y1="542.70" x2="1646.14" y2="550.00" stroke="#d0d0d0" stroke-width="1.3"/>
<text transform="translate(1646.14,569.00) scale(0.7800,1)" font-size="18.60" fill="#d8d8d8" text-anchor="middle">40</text>
<line x1="1727.86" y1="542.70" x2="1727.86" y2="550.00" stroke="#d0d0d0" stroke-width="1.3"/>
<text transform="translate(1727.86,569.00) scale(0.7800,1)" font-size="18.60" fill="#d8d8d8" text-anchor="middle">60</text>
<line x1="1809.58" y1="542.70" x2="1809.58" y2="550.00" stroke="#d0d0d0" stroke-width="1.3"/>
<text transform="translate(1809.58,569.00) scale(0.7800,1)" font-size="18.60" fill="#d8d8d8" text-anchor="middle">80</text>
<line x1="1891.30" y1="542.70" x2="1891.30" y2="550.00" stroke="#d0d0d0" stroke-width="1.3"/>
<text transform="translate(1891.30,569.00) scale(0.7800,1)" font-size="18.60" fill="#d8d8d8" text-anchor="middle">100</text>
<polyline points="1482.70,749.86 1523.56,404.25 1564.42,353.47 1605.28,319.36 1646.14,307.85 1687.00,305.47 1727.86,309.04 1768.72,323.72 1809.58,317.37 1850.44,263.82 1891.30,349.90" fill="none" stroke="#8a8a8a" stroke-width="3" clip-path="url(#gclip)"/>
<polyline points="1496.59,550.63 1496.72,550.00 1496.88,549.25 1497.06,548.35 1497.27,547.31 1497.51,546.12 1497.80,544.76 1498.13,543.23 1498.51,541.51 1498.94,539.62 1499.42,537.56 1499.93,535.34 1500.49,532.96 1501.09,530.40 1501.72,527.67 1502.39,524.76 1503.09,521.67 1503.85,518.23 1504.67,514.36 1505.54,510.21 1506.44,505.93 1507.35,501.69 1508.26,497.64 1509.15,493.94 1509.99,490.73 1510.80,488.03 1511.60,485.68 1512.38,483.62 1513.15,481.78 1513.92,480.09 1514.68,478.49 1515.44,476.90 1516.21,475.26 1516.90,473.74 1517.48,472.48 1518.02,471.35 1518.58,470.25 1519.22,469.06 1520.01,467.66 1521.02,465.93 1522.29,463.76 1523.91,461.00 1525.83,457.72 1527.98,454.08 1530.26,450.24 1532.61,446.39 1534.94,442.68 1537.17,439.29 1539.21,436.38 1541.08,433.96 1542.86,431.85 1544.57,429.98 1546.25,428.30 1547.91,426.74 1549.59,425.23 1551.31,423.70 1553.10,422.10 1554.89,420.48 1556.63,418.91 1558.37,417.38 1560.14,415.88 1562.00,414.39 1563.98,412.89 1566.13,411.37 1568.51,409.81 1571.12,408.18 1573.94,406.50 1576.92,404.78 1580.04,403.06 1583.25,401.37 1586.51,399.73 1589.78,398.17 1593.02,396.71 1596.28,395.37 1599.61,394.11 1602.99,392.92 1606.40,391.78 1609.83,390.69 1613.25,389.64 1616.64,388.61 1619.99,387.59 1623.20,386.62 1626.24,385.71 1629.21,384.85 1632.20,384.02 1635.29,383.19 1638.59,382.33 1642.17,381.42 1646.14,380.45 1650.54,379.39 1655.32,378.24 1660.39,377.05 1665.65,375.84 1671.03,374.63 1676.44,373.46 1681.79,372.35 1687.00,371.33 1692.11,370.39 1697.21,369.51 1702.32,368.67 1707.43,367.88 1712.54,367.12 1717.64,366.39 1722.75,365.68 1727.86,364.98 1732.97,364.30 1738.08,363.65 1743.18,363.02 1748.29,362.42 1753.40,361.85 1758.51,361.29 1763.61,360.75 1768.72,360.22 1773.83,359.71 1778.93,359.21 1784.04,358.74 1789.15,358.28 1794.26,357.85 1799.37,357.43 1804.47,357.03 1809.58,356.65 1814.69,356.30 1819.80,355.98 1824.90,355.69 1830.01,355.41 1835.12,355.14 1840.22,354.86 1845.33,354.58 1850.44,354.27 1855.83,353.92 1861.61,353.54 1867.56,353.13 1873.42,352.73 1878.97,352.35 1883.96,352.00 1888.15,351.71 1891.30,351.49" fill="none" stroke="#ffff00" stroke-width="3.5" stroke-linejoin="round" clip-path="url(#gclip)"/>
<rect x="578.00" y="858" width="5.93" height="203" fill="url(#cs0)"/>
<rect x="583.33" y="858" width="5.93" height="203" fill="url(#cs1)"/>
<rect x="588.67" y="858" width="5.93" height="203" fill="url(#cs2)"/>
<rect x="594.00" y="858" width="5.93" height="203" fill="url(#cs3)"/>
<rect x="599.33" y="858" width="5.93" height="203" fill="url(#cs4)"/>
<rect x="604.67" y="858" width="5.93" height="203" fill="url(#cs5)"/>
<rect x="610.00" y="858" width="5.93" height="203" fill="url(#cs6)"/>
<rect x="615.33" y="858" width="5.93" height="203" fill="url(#cs7)"/>
<rect x="620.67" y="858" width="5.93" height="203" fill="url(#cs8)"/>
<rect x="626.00" y="858" width="5.93" height="203" fill="url(#cs9)"/>
<rect x="631.33" y="858" width="5.93" height="203" fill="url(#cs10)"/>
<rect x="636.67" y="858" width="5.93" height="203" fill="url(#cs11)"/>
<rect x="642.00" y="858" width="5.93" height="203" fill="url(#cs12)"/>
<rect x="647.33" y="858" width="5.93" height="203" fill="url(#cs13)"/>
<rect x="652.67" y="858" width="5.93" height="203" fill="url(#cs14)"/>
<rect x="658.00" y="858" width="5.93" height="203" fill="url(#cs15)"/>
<rect x="663.33" y="858" width="5.93" height="203" fill="url(#cs16)"/>
<rect x="668.67" y="858" width="5.93" height="203" fill="url(#cs17)"/>
<rect x="674.00" y="858" width="5.93" height="203" fill="url(#cs18)"/>
<rect x="679.33" y="858" width="5.93" height="203" fill="url(#cs19)"/>
<rect x="684.67" y="858" width="5.93" height="203" fill="url(#cs20)"/>
<rect x="690.00" y="858" width="5.93" height="203" fill="url(#cs21)"/>
<rect x="695.33" y="858" width="5.93" height="203" fill="url(#cs22)"/>
<rect x="700.67" y="858" width="5.93" height="203" fill="url(#cs23)"/>
<rect x="706.00" y="858" width="5.93" height="203" fill="url(#cs24)"/>
<rect x="711.33" y="858" width="5.93" height="203" fill="url(#cs25)"/>
<rect x="716.67" y="858" width="5.93" height="203" fill="url(#cs26)"/>
<rect x="722.00" y="858" width="5.93" height="203" fill="url(#cs27)"/>
<rect x="727.33" y="858" width="5.93" height="203" fill="url(#cs28)"/>
<rect x="732.67" y="858" width="5.93" height="203" fill="url(#cs29)"/>
<rect x="738.00" y="858" width="5.93" height="203" fill="url(#cs30)"/>
<rect x="743.33" y="858" width="5.93" height="203" fill="url(#cs31)"/>
<rect x="748.67" y="858" width="5.93" height="203" fill="url(#cs32)"/>
<rect x="754.00" y="858" width="5.93" height="203" fill="url(#cs33)"/>
<rect x="759.33" y="858" width="5.93" height="203" fill="url(#cs34)"/>
<rect x="764.67" y="858" width="5.93" height="203" fill="url(#cs35)"/>
<rect x="770.00" y="858" width="5.93" height="203" fill="url(#cs36)"/>
<rect x="775.33" y="858" width="5.93" height="203" fill="url(#cs37)"/>
<rect x="780.67" y="858" width="5.93" height="203" fill="url(#cs38)"/>
<rect x="786.00" y="858" width="5.93" height="203" fill="url(#cs39)"/>
<rect x="791.33" y="858" width="5.93" height="203" fill="url(#cs40)"/>
<rect x="796.67" y="858" width="5.93" height="203" fill="url(#cs41)"/>
<rect x="802.00" y="858" width="5.93" height="203" fill="url(#cs42)"/>
<rect x="807.33" y="858" width="5.93" height="203" fill="url(#cs43)"/>
<rect x="812.67" y="858" width="5.93" height="203" fill="url(#cs44)"/>
<rect x="818.00" y="858" width="5.93" height="203" fill="url(#cs45)"/>
<rect x="823.33" y="858" width="5.93" height="203" fill="url(#cs46)"/>
<rect x="828.67" y="858" width="5.93" height="203" fill="url(#cs47)"/>
<line x1="587.30" y1="1064.00" x2="587.30" y2="1071.00" stroke="#d0d0d0" stroke-width="2"/>
<text transform="translate(587.30,1090.00) scale(0.7800,1)" font-size="17.73" fill="#d8d8d8" text-anchor="middle">0.29</text>
<line x1="639.30" y1="1064.00" x2="639.30" y2="1071.00" stroke="#d0d0d0" stroke-width="2"/>
<text transform="translate(639.30,1090.00) scale(0.7800,1)" font-size="17.73" fill="#d8d8d8" text-anchor="middle">0.3</text>
<line x1="691.30" y1="1064.00" x2="691.30" y2="1071.00" stroke="#d0d0d0" stroke-width="2"/>
<text transform="translate(691.30,1090.00) scale(0.7800,1)" font-size="17.73" fill="#d8d8d8" text-anchor="middle">0.31</text>
<line x1="743.30" y1="1064.00" x2="743.30" y2="1071.00" stroke="#d0d0d0" stroke-width="2"/>
<text transform="translate(743.30,1090.00) scale(0.7800,1)" font-size="17.73" fill="#d8d8d8" text-anchor="middle">0.32</text>
<line x1="795.30" y1="1064.00" x2="795.30" y2="1071.00" stroke="#d0d0d0" stroke-width="2"/>
<text transform="translate(795.30,1090.00) scale(0.7800,1)" font-size="17.73" fill="#d8d8d8" text-anchor="middle">0.33</text>
<line x1="568.00" y1="915.60" x2="575.00" y2="915.60" stroke="#d0d0d0" stroke-width="2"/>
<text transform="translate(568.00,921.80) scale(0.7800,1)" font-size="17.73" fill="#d8d8d8" text-anchor="end">0.34</text>
<line x1="568.00" y1="998.90" x2="575.00" y2="998.90" stroke="#d0d0d0" stroke-width="2"/>
<text transform="translate(568.00,1005.10) scale(0.7800,1)" font-size="17.73" fill="#d8d8d8" text-anchor="end">0.32</text>
<path d="M 605.5 1065 Q 722 964.9 838 888.3" fill="none" stroke="#000" stroke-width="3.6" clip-path="url(#cclip)"/>
<rect x="699.3" y="950.3" width="12.8" height="16.3" fill="#fff" stroke="#000" stroke-width="1.8"/>
<ellipse cx="691.4" cy="942" rx="4.4" ry="5.7" fill="#151515" stroke="#000" stroke-width="1"/>
<ellipse cx="706.8" cy="931.7" rx="4.8" ry="5.5" fill="#fff" stroke="#000" stroke-width="1.1"/>
<ellipse cx="731" cy="906" rx="4.8" ry="5.6" fill="#3a3a3a" stroke="#000" stroke-width="1"/>
<ellipse cx="729.5" cy="907.5" rx="4.8" ry="5.6" fill="#555" stroke="#000" stroke-width="1"/>
<ellipse cx="728" cy="909" rx="4.8" ry="5.6" fill="#6a6a6a" stroke="#000" stroke-width="1"/>
<ellipse cx="726" cy="910.5" rx="4.8" ry="5.6" fill="#888" stroke="#000" stroke-width="1"/>
<ellipse cx="724" cy="912" rx="4.8" ry="5.6" fill="#9a9a9a" stroke="#000" stroke-width="1"/>
<ellipse cx="721.5" cy="914.2" rx="4.8" ry="5.6" fill="#b8b8b8" stroke="#000" stroke-width="1"/>
<ellipse cx="718" cy="918.2" rx="4.8" ry="5.6" fill="#dadada" stroke="#000" stroke-width="1"/>
<text transform="translate(23.75,16.30) scale(0.9112,1)" font-size="12.72" fill="#101010">CalMAN 2019 CalMAN Ultimate for Business 271 Days Remaining</text>

<text transform="translate(10.30,13.50) scale(0.8390,1)" font-size="8.43" fill="#f0f0f0" font-weight="bold" text-anchor="middle">CM</text>
<line x1="1800.00" y1="10.50" x2="1809.00" y2="10.50" stroke="#111" stroke-width="1.2"/>
<rect x="1844.5" y="7.5" width="7.5" height="7" fill="none" stroke="#111" stroke-width="1.1"/><path d="M1846.5 7.5 V5.5 H1854 V12.5 H1852" fill="none" stroke="#111" stroke-width="1.1"/>
<path d="M1890.5 5 L1900 14.5 M1900 5 L1890.5 14.5" stroke="#111" stroke-width="1.2"/>
<text transform="translate(13.00,48.00) scale(1.0686,1)" font-size="31.61" fill="#ffffff" font-weight="bold">CalMAN</text>
<path d="M160.5 35 L171.5 35 L166 41 Z" fill="#fff"/>
<text transform="translate(206.50,78.30) scale(0.9665,1)" font-size="12.06" fill="#e0e0e0">History 1</text>
<path d="M270 74.5 H278 M274 70.5 V78.5" stroke="#777" stroke-width="1.2"/>
<path d="M184.5 66.5 L184.5 77 L178.5 71.75 Z" fill="#fff"/>
<text transform="translate(9.00,101.00) scale(0.9024,1)" font-size="13.52" fill="#f0f0f0">SDR Toolkit</text>
<path d="M19 123 L23.5 118.5 L23.5 123 Z" fill="#555"/>
<path d="M19 168 L23.5 163.5 L23.5 168 Z" fill="#555"/>
<text transform="translate(29.00,124.00) scale(1.0163,1)" font-size="10.47" fill="#f2f2f2" font-weight="bold">Welcome</text>
<text transform="translate(42.00,140.00) scale(1.0593,1)" font-size="10.47" fill="#f2f2f2">Welcome</text>
<text transform="translate(42.00,154.00) scale(1.0536,1)" font-size="10.47" fill="#f2f2f2">Options</text>
<text transform="translate(29.00,169.00) scale(0.9525,1)" font-size="10.47" fill="#f2f2f2" font-weight="bold">Analysis</text>
<text transform="translate(42.00,185.00) scale(1.0074,1)" font-size="10.47" fill="#f2f2f2">Dynamic Range</text>
<text transform="translate(42.00,199.00) scale(1.0147,1)" font-size="10.47" fill="#f2f2f2">Grayscale - 2pt</text>
<text transform="translate(42.00,214.00) scale(1.0318,1)" font-size="10.47" fill="#303030">Grayscale - Multi</text>
<text transform="translate(42.00,229.00) scale(1.0452,1)" font-size="10.47" fill="#f2f2f2">Color Gamut</text>
<text transform="translate(42.00,243.00) scale(0.9430,1)" font-size="10.47" fill="#f2f2f2">3D LUT</text>
<text transform="translate(42.00,258.00) scale(1.0160,1)" font-size="10.47" fill="#f2f2f2">ColorChecker</text>
<text transform="translate(42.00,273.00) scale(1.0245,1)" font-size="10.47" fill="#f2f2f2">Saturation Sweeps</text>
<text transform="translate(42.00,287.00) scale(1.0073,1)" font-size="10.47" fill="#f2f2f2">Luminance Sweeps</text>
<text transform="translate(42.00,302.00) scale(1.0581,1)" font-size="10.47" fill="#f2f2f2">Screen Uniformity</text>
<text transform="translate(42.00,317.00) scale(1.0363,1)" font-size="10.47" fill="#f2f2f2">Screen Angularity</text>
<text transform="translate(42.00,331.00) scale(1.0315,1)" font-size="10.47" fill="#f2f2f2">Screen Stability</text>
<text transform="translate(42.00,346.00) scale(1.0232,1)" font-size="10.47" fill="#f2f2f2">Spectral Power Dist.</text>
<text transform="translate(1437.00,70.00) scale(0.9282,1)" font-size="11.34" fill="#f0f0f0">X-Rite i1Pro 2</text>
<text transform="translate(1437.00,84.00) scale(0.9716,1)" font-size="11.34" fill="#f0f0f0">Direct View</text>
<text transform="translate(1555.50,77.00) scale(0.9425,1)" font-size="10.17" fill="#fff" text-anchor="middle">238</text>
<text transform="translate(1585.00,70.00) scale(0.9187,1)" font-size="11.34" fill="#f0f0f0">Source</text>
<text transform="translate(1721.00,70.00) scale(0.9669,1)" font-size="11.34" fill="#f0f0f0">Direct Display Control</text>
<path d="M1511 71 L1521 71 L1516 76 Z" fill="#fff"/>
<path d="M1686 71 L1696 71 L1691 76 Z" fill="#fff"/>
<path d="M1835 71 L1845 71 L1840 76 Z" fill="#fff"/>
<rect x="1873.90" y="64.00" width="3.2" height="4" fill="#bdbdbd" transform="rotate(0 1875.5 72.5)"/><rect x="1873.90" y="64.00" width="3.2" height="4" fill="#bdbdbd" transform="rotate(45 1875.5 72.5)"/><rect x="1873.90" y="64.00" width="3.2" height="4" fill="#bdbdbd" transform="rotate(90 1875.5 72.5)"/><rect x="1873.90" y="64.00" width="3.2" height="4" fill="#bdbdbd" transform="rotate(135 1875.5 72.5)"/><rect x="1873.90" y="64.00" width="3.2" height="4" fill="#bdbdbd" transform="rotate(180 1875.5 72.5)"/><rect x="1873.90" y="64.00" width="3.2" height="4" fill="#bdbdbd" transform="rotate(225 1875.5 72.5)"/><rect x="1873.90" y="64.00" width="3.2" height="4" fill="#bdbdbd" transform="rotate(270 1875.5 72.5)"/><rect x="1873.90" y="64.00" width="3.2" height="4" fill="#bdbdbd" transform="rotate(315 1875.5 72.5)"/><circle cx="1875.5" cy="72.5" r="5.8" fill="none" stroke="#bdbdbd" stroke-width="2.6"/>
<path d="M1910.5 67 L1910.5 78 L1904.5 72.5 Z" fill="#e8e8e8"/>
<text transform="translate(208.80,150.30) scale(0.8041,1)" font-size="51.31" fill="#ececec" stroke="#ececec" stroke-width="0.6">Grayscale - Multi</text>
<text transform="translate(314.30,209.00) scale(0.7635,1)" font-size="26.45" fill="#ececec" stroke="#ececec" stroke-width="0.4">dE Formula:</text>
<text transform="translate(438.50,209.50) scale(0.7422,1)" font-size="21.80" fill="#f0f0f0">2000</text>
<path d="M571 196.5 L580 196.5 L575.5 204 Z" fill="#111"/>
<text transform="translate(353.40,248.90) scale(0.7868,1)" font-size="18.75" fill="#d8d8d8">DeltaE 2000</text>
<text transform="translate(873.75,138.90) scale(0.7386,1)" font-size="19.04" fill="#d8d8d8">RGB Balance</text>
<text transform="translate(1298.40,138.90) scale(0.7342,1)" font-size="19.04" fill="#d8d8d8">RGB Balance</text>
<text transform="translate(1617.80,138.60) scale(0.8188,1)" font-size="18.31" fill="#d8d8d8">Gamma Log/Log</text>
<text transform="translate(289.20,621.30) scale(0.7736,1)" font-size="38.95" fill="#ececec" stroke="#ececec" stroke-width="0.5">Avg dE2000: 4.5</text>
<text transform="translate(712.80,621.10) scale(0.7490,1)" font-size="38.95" fill="#ececec" stroke="#ececec" stroke-width="0.5">Avg CCT: 6289</text>
<text transform="translate(1099.20,621.10) scale(0.7929,1)" font-size="38.95" fill="#ececec" stroke="#ececec" stroke-width="0.5">Contrast Ratio: 1526</text>
<text transform="translate(1510.90,621.30) scale(0.7860,1)" font-size="38.95" fill="#ececec" stroke="#ececec" stroke-width="0.5">Average Gamma: 2.349</text>
<text transform="translate(312.5,681) rotate(-90)" font-size="15" fill="#f0f0f0" font-weight="bold" text-anchor="middle" textLength="42" lengthAdjust="spacingAndGlyphs">Actual</text>
<text transform="translate(312.5,753) rotate(-90)" font-size="15" fill="#f0f0f0" font-weight="bold" text-anchor="middle" textLength="42" lengthAdjust="spacingAndGlyphs">Target</text>
<text transform="translate(384.50,799.50) scale(0.8000,1)" font-size="16.72" fill="#f4f4f4" text-anchor="middle">0</text>
<text transform="translate(529.20,799.50) scale(0.8000,1)" font-size="16.72" fill="#f4f4f4" text-anchor="middle">10</text>
<text transform="translate(673.90,799.50) scale(0.8000,1)" font-size="16.72" fill="#f4f4f4" text-anchor="middle">20</text>
<text transform="translate(818.60,799.50) scale(0.8000,1)" font-size="16.72" fill="#f4f4f4" text-anchor="middle">30</text>
<text transform="translate(963.30,799.50) scale(0.8000,1)" font-size="16.72" fill="#f4f4f4" text-anchor="middle">40</text>
<text transform="translate(1108.00,799.50) scale(0.8000,1)" font-size="16.72" fill="#f4f4f4" text-anchor="middle">50</text>
<text transform="translate(1252.70,799.50) scale(0.8000,1)" font-size="16.72" fill="#f4f4f4" text-anchor="middle">60</text>
<text transform="translate(1397.40,799.50) scale(0.8000,1)" font-size="16.72" fill="#f4f4f4" text-anchor="middle">70</text>
<text transform="translate(1542.10,799.50) scale(0.8000,1)" font-size="16.72" fill="#f4f4f4" text-anchor="middle">80</text>
<text transform="translate(1686.80,799.50) scale(0.8000,1)" font-size="16.72" fill="#f4f4f4" text-anchor="middle">90</text>
<text transform="translate(1831.50,799.50) scale(0.8000,1)" font-size="16.72" fill="#f4f4f4" text-anchor="middle">100</text>
<text transform="translate(222.80,893.00) scale(0.8056,1)" font-size="38.08" fill="#ececec" stroke="#ececec" stroke-width="0.45">Current Reading</text>
<text transform="translate(222.60,945.80) scale(0.8588,1)" font-size="29.65" fill="#ececec" stroke="#ececec" stroke-width="0.45">x: 0.313</text>
<text transform="translate(376.70,945.80) scale(0.8738,1)" font-size="29.65" fill="#ececec" stroke="#ececec" stroke-width="0.45">y: 0.3358</text>
<text transform="translate(222.60,988.00) scale(0.8831,1)" font-size="29.65" fill="#ececec" stroke="#ececec" stroke-width="0.45">u': 0.1955</text>
<text transform="translate(376.70,988.00) scale(0.8744,1)" font-size="29.65" fill="#ececec" stroke="#ececec" stroke-width="0.45">v': 0.472</text>
<text transform="translate(222.60,1030.90) scale(0.9002,1)" font-size="29.65" fill="#ececec" stroke="#ececec" stroke-width="0.45">cd/m²: 266.2875</text>
<text transform="translate(222.60,1072.60) scale(0.8427,1)" font-size="29.65" fill="#ececec" stroke="#ececec" stroke-width="0.45">ΔE 2000: 4.98</text>
<text transform="translate(688.00,851.50) scale(0.8000,1)" font-size="17.73" fill="#d8d8d8" text-anchor="middle">CIE 1931 xy</text>
<text transform="translate(969.00,842.80) scale(0.7400,1)" font-size="15.55" fill="#f4f4f4">0</text>
<text transform="translate(1045.00,842.80) scale(0.7400,1)" font-size="15.55" fill="#f4f4f4">10</text>
<text transform="translate(1114.00,842.80) scale(0.7400,1)" font-size="15.55" fill="#f4f4f4">20</text>
<text transform="translate(1183.00,842.80) scale(0.7400,1)" font-size="15.55" fill="#f4f4f4">30</text>
<text transform="translate(1252.00,842.80) scale(0.7400,1)" font-size="15.55" fill="#f4f4f4">40</text>
<text transform="translate(1320.00,842.80) scale(0.7400,1)" font-size="15.55" fill="#f4f4f4">50</text>
<text transform="translate(1389.00,842.80) scale(0.7400,1)" font-size="15.55" fill="#f4f4f4">60</text>
<text transform="translate(1458.00,842.80) scale(0.7400,1)" font-size="15.55" fill="#f4f4f4">70</text>
<text transform="translate(1527.00,842.80) scale(0.7400,1)" font-size="15.55" fill="#f4f4f4">80</text>
<text transform="translate(1596.00,842.80) scale(0.7400,1)" font-size="15.55" fill="#f4f4f4">90</text>
<text transform="translate(1665.00,842.80) scale(0.7400,1)" font-size="15.55" fill="#f4f4f4">100</text>
<text transform="translate(862.00,874.10) scale(0.7200,1)" font-size="18.60" fill="#f0f0f0">x: CIE31</text>
<text transform="translate(969.00,874.10) scale(0.6900,1)" font-size="18.60" fill="#f0f0f0">0.2448</text>
<text transform="translate(1045.00,874.10) scale(0.6900,1)" font-size="18.60" fill="#f0f0f0">0.3100</text>
<text transform="translate(1114.00,874.10) scale(0.6900,1)" font-size="18.60" fill="#f0f0f0">0.3162</text>
<text transform="translate(1183.00,874.10) scale(0.6900,1)" font-size="18.60" fill="#f0f0f0">0.3173</text>
<text transform="translate(1252.00,874.10) scale(0.6900,1)" font-size="18.60" fill="#f0f0f0">0.3176</text>
<text transform="translate(1320.00,874.10) scale(0.6900,1)" font-size="18.60" fill="#f0f0f0">0.3173</text>
<text transform="translate(1389.00,874.10) scale(0.6900,1)" font-size="18.60" fill="#f0f0f0">0.3171</text>
<text transform="translate(1458.00,874.10) scale(0.6900,1)" font-size="18.60" fill="#f0f0f0">0.3166</text>
<text transform="translate(1527.00,874.10) scale(0.6900,1)" font-size="18.60" fill="#f0f0f0">0.3160</text>
<text transform="translate(1596.00,874.10) scale(0.6900,1)" font-size="18.60" fill="#f0f0f0">0.3151</text>
<text transform="translate(1665.00,874.10) scale(0.6900,1)" font-size="18.60" fill="#f0f0f0">0.3130</text>
<text transform="translate(862.00,903.10) scale(0.7200,1)" font-size="18.60" fill="#f0f0f0">y: CIE31</text>
<text transform="translate(969.00,903.10) scale(0.6900,1)" font-size="18.60" fill="#f0f0f0">0.2566</text>
<text transform="translate(1045.00,903.10) scale(0.6900,1)" font-size="18.60" fill="#f0f0f0">0.3332</text>
<text transform="translate(1114.00,903.10) scale(0.6900,1)" font-size="18.60" fill="#f0f0f0">0.3401</text>
<text transform="translate(1183.00,903.10) scale(0.6900,1)" font-size="18.60" fill="#f0f0f0">0.3412</text>
<text transform="translate(1252.00,903.10) scale(0.6900,1)" font-size="18.60" fill="#f0f0f0">0.3417</text>
<text transform="translate(1320.00,903.10) scale(0.6900,1)" font-size="18.60" fill="#f0f0f0">0.3416</text>
<text transform="translate(1389.00,903.10) scale(0.6900,1)" font-size="18.60" fill="#f0f0f0">0.3414</text>
<text transform="translate(1458.00,903.10) scale(0.6900,1)" font-size="18.60" fill="#f0f0f0">0.3410</text>
<text transform="translate(1527.00,903.10) scale(0.6900,1)" font-size="18.60" fill="#f0f0f0">0.3404</text>
<text transform="translate(1596.00,903.10) scale(0.6900,1)" font-size="18.60" fill="#f0f0f0">0.3392</text>
<text transform="translate(1665.00,903.10) scale(0.6900,1)" font-size="18.60" fill="#f0f0f0">0.3358</text>
<text transform="translate(862.00,932.10) scale(0.7200,1)" font-size="18.60" fill="#f0f0f0">Y</text>
<text transform="translate(969.00,932.10) scale(0.6900,1)" font-size="18.60" fill="#f0f0f0">0.1745</text>
<text transform="translate(1045.00,932.10) scale(0.6900,1)" font-size="18.60" fill="#f0f0f0">1.9921</text>
<text transform="translate(1114.00,932.10) scale(0.6900,1)" font-size="18.60" fill="#f0f0f0">6.8831</text>
<text transform="translate(1183.00,932.10) scale(0.6900,1)" font-size="18.60" fill="#141414">15.3542</text>
<text transform="translate(1252.00,932.10) scale(0.6900,1)" font-size="18.60" fill="#f0f0f0">29.8989</text>
<text transform="translate(1320.00,932.10) scale(0.6900,1)" font-size="18.60" fill="#f0f0f0">51.2002</text>
<text transform="translate(1389.00,932.10) scale(0.6900,1)" font-size="18.60" fill="#f0f0f0">78.8340</text>
<text transform="translate(1458.00,932.10) scale(0.6900,1)" font-size="18.60" fill="#f0f0f0">114.5351</text>
<text transform="translate(1527.00,932.10) scale(0.6900,1)" font-size="18.60" fill="#f0f0f0">157.1562</text>
<text transform="translate(1596.00,932.10) scale(0.6900,1)" font-size="18.60" fill="#f0f0f0">205.8363</text>
<text transform="translate(1665.00,932.10) scale(0.6900,1)" font-size="18.60" fill="#f0f0f0">266.2875</text>
<text transform="translate(862.00,961.10) scale(0.7200,1)" font-size="18.60" fill="#f0f0f0">Target Y</text>
<text transform="translate(969.00,961.10) scale(0.6900,1)" font-size="18.60" fill="#f0f0f0">0.0000</text>
<text transform="translate(1045.00,961.10) scale(0.6900,1)" font-size="18.60" fill="#f0f0f0">2.7507</text>
<text transform="translate(1114.00,961.10) scale(0.6900,1)" font-size="18.60" fill="#f0f0f0">8.8154</text>
<text transform="translate(1183.00,961.10) scale(0.6900,1)" font-size="18.60" fill="#f0f0f0">19.2451</text>
<text transform="translate(1252.00,961.10) scale(0.6900,1)" font-size="18.60" fill="#f0f0f0">35.3812</text>
<text transform="translate(1320.00,961.10) scale(0.6900,1)" font-size="18.60" fill="#f0f0f0">57.4809</text>
<text transform="translate(1389.00,961.10) scale(0.6900,1)" font-size="18.60" fill="#f0f0f0">84.8250</text>
<text transform="translate(1458.00,961.10) scale(0.6900,1)" font-size="18.60" fill="#f0f0f0">118.5515</text>
<text transform="translate(1527.00,961.10) scale(0.6900,1)" font-size="18.60" fill="#f0f0f0">160.7917</text>
<text transform="translate(1596.00,961.10) scale(0.6900,1)" font-size="18.60" fill="#f0f0f0">210.7127</text>
<text transform="translate(1665.00,961.10) scale(0.6900,1)" font-size="18.60" fill="#f0f0f0">266.2875</text>
<text transform="translate(862.00,990.10) scale(0.7200,1)" font-size="18.60" fill="#f0f0f0">Gamma Log/Log</text>
<text transform="translate(969.00,990.10) scale(0.6900,1)" font-size="18.60" fill="#f0f0f0">1.2778</text>
<text transform="translate(1045.00,990.10) scale(0.6900,1)" font-size="18.60" fill="#f0f0f0">2.1441</text>
<text transform="translate(1114.00,990.10) scale(0.6900,1)" font-size="18.60" fill="#f0f0f0">2.2713</text>
<text transform="translate(1183.00,990.10) scale(0.6900,1)" font-size="18.60" fill="#f0f0f0">2.3570</text>
<text transform="translate(1252.00,990.10) scale(0.6900,1)" font-size="18.60" fill="#f0f0f0">2.3865</text>
<text transform="translate(1320.00,990.10) scale(0.6900,1)" font-size="18.60" fill="#f0f0f0">2.3923</text>
<text transform="translate(1389.00,990.10) scale(0.6900,1)" font-size="18.60" fill="#f0f0f0">2.3829</text>
<text transform="translate(1458.00,990.10) scale(0.6900,1)" font-size="18.60" fill="#f0f0f0">2.3470</text>
<text transform="translate(1527.00,990.10) scale(0.6900,1)" font-size="18.60" fill="#f0f0f0">2.3632</text>
<text transform="translate(1596.00,990.10) scale(0.6900,1)" font-size="18.60" fill="#f0f0f0">2.4955</text>
<text transform="translate(1665.00,990.10) scale(0.6900,1)" font-size="18.60" fill="#f0f0f0">2.2749</text>
<text transform="translate(862.00,1019.10) scale(0.7200,1)" font-size="18.60" fill="#f0f0f0">CCT</text>
<text transform="translate(969.00,1019.10) scale(0.6900,1)" font-size="18.60" fill="#f0f0f0">20199.0000</text>
<text transform="translate(1045.00,1019.10) scale(0.6900,1)" font-size="18.60" fill="#f0f0f0">6616.0000</text>
<text transform="translate(1114.00,1019.10) scale(0.6900,1)" font-size="18.60" fill="#f0f0f0">6256.0000</text>
<text transform="translate(1183.00,1019.10) scale(0.6900,1)" font-size="18.60" fill="#f0f0f0">6194.0000</text>
<text transform="translate(1252.00,1019.10) scale(0.6900,1)" font-size="18.60" fill="#f0f0f0">6178.0000</text>
<text transform="translate(1320.00,1019.10) scale(0.6900,1)" font-size="18.60" fill="#f0f0f0">6193.0000</text>
<text transform="translate(1389.00,1019.10) scale(0.6900,1)" font-size="18.60" fill="#f0f0f0">6207.0000</text>
<text transform="translate(1458.00,1019.10) scale(0.6900,1)" font-size="18.60" fill="#f0f0f0">6230.0000</text>
<text transform="translate(1527.00,1019.10) scale(0.6900,1)" font-size="18.60" fill="#f0f0f0">6261.0000</text>
<text transform="translate(1596.00,1019.10) scale(0.6900,1)" font-size="18.60" fill="#f0f0f0">6312.0000</text>
<text transform="translate(1665.00,1019.10) scale(0.6900,1)" font-size="18.60" fill="#f0f0f0">6443.0000</text>
<text transform="translate(862.00,1048.10) scale(0.7200,1)" font-size="18.60" fill="#f0f0f0">ΔE 2000</text>
<text transform="translate(969.00,1048.10) scale(0.6900,1)" font-size="18.60" fill="#f0f0f0">0.8565</text>
<text transform="translate(1045.00,1048.10) scale(0.6900,1)" font-size="18.60" fill="#f0f0f0">1.7959</text>
<text transform="translate(1114.00,1048.10) scale(0.6900,1)" font-size="18.60" fill="#f0f0f0">2.9130</text>
<text transform="translate(1183.00,1048.10) scale(0.6900,1)" font-size="18.60" fill="#f0f0f0">3.9154</text>
<text transform="translate(1252.00,1048.10) scale(0.6900,1)" font-size="18.60" fill="#f0f0f0">4.6030</text>
<text transform="translate(1320.00,1048.10) scale(0.6900,1)" font-size="18.60" fill="#f0f0f0">4.9358</text>
<text transform="translate(1389.00,1048.10) scale(0.6900,1)" font-size="18.60" fill="#f0f0f0">5.0334</text>
<text transform="translate(1458.00,1048.10) scale(0.6900,1)" font-size="18.60" fill="#f0f0f0">5.3072</text>
<text transform="translate(1527.00,1048.10) scale(0.6900,1)" font-size="18.60" fill="#f0f0f0">5.6312</text>
<text transform="translate(1596.00,1048.10) scale(0.6900,1)" font-size="18.60" fill="#f0f0f0">5.7446</text>
<text transform="translate(1665.00,1048.10) scale(0.6900,1)" font-size="18.60" fill="#f0f0f0">4.9764</text>
<text transform="translate(862.00,1077.10) scale(0.7200,1)" font-size="18.60" fill="#f0f0f0">dEITP</text>
<text transform="translate(969.00,1077.10) scale(0.6900,1)" font-size="18.60" fill="#f0f0f0">58.4783</text>
<text transform="translate(1045.00,1077.10) scale(0.6900,1)" font-size="18.60" fill="#f0f0f0">14.4702</text>
<text transform="translate(1114.00,1077.10) scale(0.6900,1)" font-size="18.60" fill="#f0f0f0">14.0695</text>
<text transform="translate(1183.00,1077.10) scale(0.6900,1)" font-size="18.60" fill="#f0f0f0">14.5353</text>
<text transform="translate(1252.00,1077.10) scale(0.6900,1)" font-size="18.60" fill="#f0f0f0">12.1204</text>
<text transform="translate(1320.00,1077.10) scale(0.6900,1)" font-size="18.60" fill="#f0f0f0">9.4124</text>
<text transform="translate(1389.00,1077.10) scale(0.6900,1)" font-size="18.60" fill="#f0f0f0">7.1950</text>
<text transform="translate(1458.00,1077.10) scale(0.6900,1)" font-size="18.60" fill="#f0f0f0">5.4120</text>
<text transform="translate(1527.00,1077.10) scale(0.6900,1)" font-size="18.60" fill="#f0f0f0">4.9077</text>
<text transform="translate(1596.00,1077.10) scale(0.6900,1)" font-size="18.60" fill="#f0f0f0">4.6063</text>
<text transform="translate(1665.00,1077.10) scale(0.6900,1)" font-size="18.60" fill="#f0f0f0">3.1339</text>
<text transform="translate(263.50,1163.50) scale(0.8500,1)" font-size="10.90" fill="#1e1e1e" text-anchor="middle" stroke="#1e1e1e" stroke-width="0.35">0</text>
<text transform="translate(390.30,1163.50) scale(0.8500,1)" font-size="10.90" fill="#1e1e1e" text-anchor="middle" stroke="#1e1e1e" stroke-width="0.35">10</text>
<text transform="translate(517.10,1163.50) scale(0.8500,1)" font-size="10.90" fill="#1e1e1e" text-anchor="middle" stroke="#1e1e1e" stroke-width="0.35">20</text>
<text transform="translate(643.90,1163.50) scale(0.8500,1)" font-size="10.90" fill="#1e1e1e" text-anchor="middle" stroke="#1e1e1e" stroke-width="0.35">30</text>
<text transform="translate(770.70,1163.50) scale(0.8500,1)" font-size="10.90" fill="#1e1e1e" text-anchor="middle" stroke="#1e1e1e" stroke-width="0.35">40</text>
<text transform="translate(897.50,1163.50) scale(0.8500,1)" font-size="10.90" fill="#1e1e1e" text-anchor="middle" stroke="#1e1e1e" stroke-width="0.35">50</text>
<text transform="translate(1024.30,1163.50) scale(0.8500,1)" font-size="10.90" fill="#1e1e1e" text-anchor="middle" stroke="#1e1e1e" stroke-width="0.35">60</text>
<text transform="translate(1151.10,1163.50) scale(0.8500,1)" font-size="10.90" fill="#1e1e1e" text-anchor="middle" stroke="#1e1e1e" stroke-width="0.35">70</text>
<text transform="translate(1277.90,1163.50) scale(0.8500,1)" font-size="10.90" fill="#1e1e1e" text-anchor="middle" stroke="#1e1e1e" stroke-width="0.35">80</text>
<text transform="translate(1404.70,1163.50) scale(0.8500,1)" font-size="10.90" fill="#1e1e1e" text-anchor="middle" stroke="#1e1e1e" stroke-width="0.35">90</text>
<text transform="translate(1531.50,1164.00) scale(0.8500,1)" font-size="11.63" fill="#fff" font-weight="bold" text-anchor="middle">100</text>
<text transform="translate(1704.30,1161.50) scale(1.0073,1)" font-size="22.24" fill="#2a2a2a" stroke="#2a2a2a" stroke-width="0.5">Back</text>
<text transform="translate(1810.90,1161.50) scale(1.1088,1)" font-size="22.24" fill="#2a2a2a" stroke="#2a2a2a" stroke-width="0.5">Next</text>
<path d="M1677 1149 L1672.5 1154 L1677 1159 M1681.5 1149 L1677 1154 L1681.5 1159" fill="none" stroke="#2a2a2a" stroke-width="1.6"/>
<path d="M1888.5 1149 L1893 1154 L1888.5 1159 M1884 1149 L1888.5 1154 L1884 1159" fill="none" stroke="#2a2a2a" stroke-width="1.6"/>
<g><path d="M1535 1088 L1585 1098 L1587 1129 L1623 1135 L1569 1154 L1539 1137 Z" fill="none" stroke="#e0e0e0" stroke-opacity="0.55" stroke-width="8" stroke-linejoin="round"/><path d="M1535 1088 L1585 1098 L1587 1129 L1623 1135 L1569 1154 L1539 1137 Z" fill="none" stroke="#a02a34" stroke-opacity="0.62" stroke-width="5.5" stroke-linejoin="round"/><path d="M1548 1131 L1623 1135" stroke="#c04050" stroke-opacity="0.6" stroke-width="2"/><path d="M1550 1105 L1565 1124 L1593 1087" fill="none" stroke="#d8d8d8" stroke-opacity="0.6" stroke-width="6" stroke-linejoin="round"/><path d="M1550 1105 L1565 1124 L1593 1087" fill="none" stroke="#2a2a2a" stroke-opacity="0.9" stroke-width="3.5" stroke-linejoin="round"/></g>
<text transform="translate(1593.00,1126.50) scale(0.8928,1)" font-size="38.52" fill="none" font-weight="bold" stroke="#d0d0d0" stroke-opacity="0.8" stroke-width="4" stroke-linejoin="round">NOTEBOOK</text>
<text transform="translate(1792.80,1127.00) scale(0.8385,1)" font-size="39.24" fill="none" font-weight="bold" stroke="#d0d0d0" stroke-opacity="0.8" stroke-width="4" stroke-linejoin="round">CHECK</text>
<g opacity="0.72"><text transform="translate(1593.00,1126.50) scale(0.8928,1)" font-size="38.52" fill="#8e2230" font-weight="bold" stroke="#8e2230" stroke-width="1.6" stroke-linejoin="round">NOTEBOOK</text></g>
<g opacity="0.72"><text transform="translate(1792.80,1127.00) scale(0.8385,1)" font-size="39.24" fill="#222" font-weight="bold" stroke="#222" stroke-width="1.6" stroke-linejoin="round">CHECK</text></g>
</svg></body></html>
